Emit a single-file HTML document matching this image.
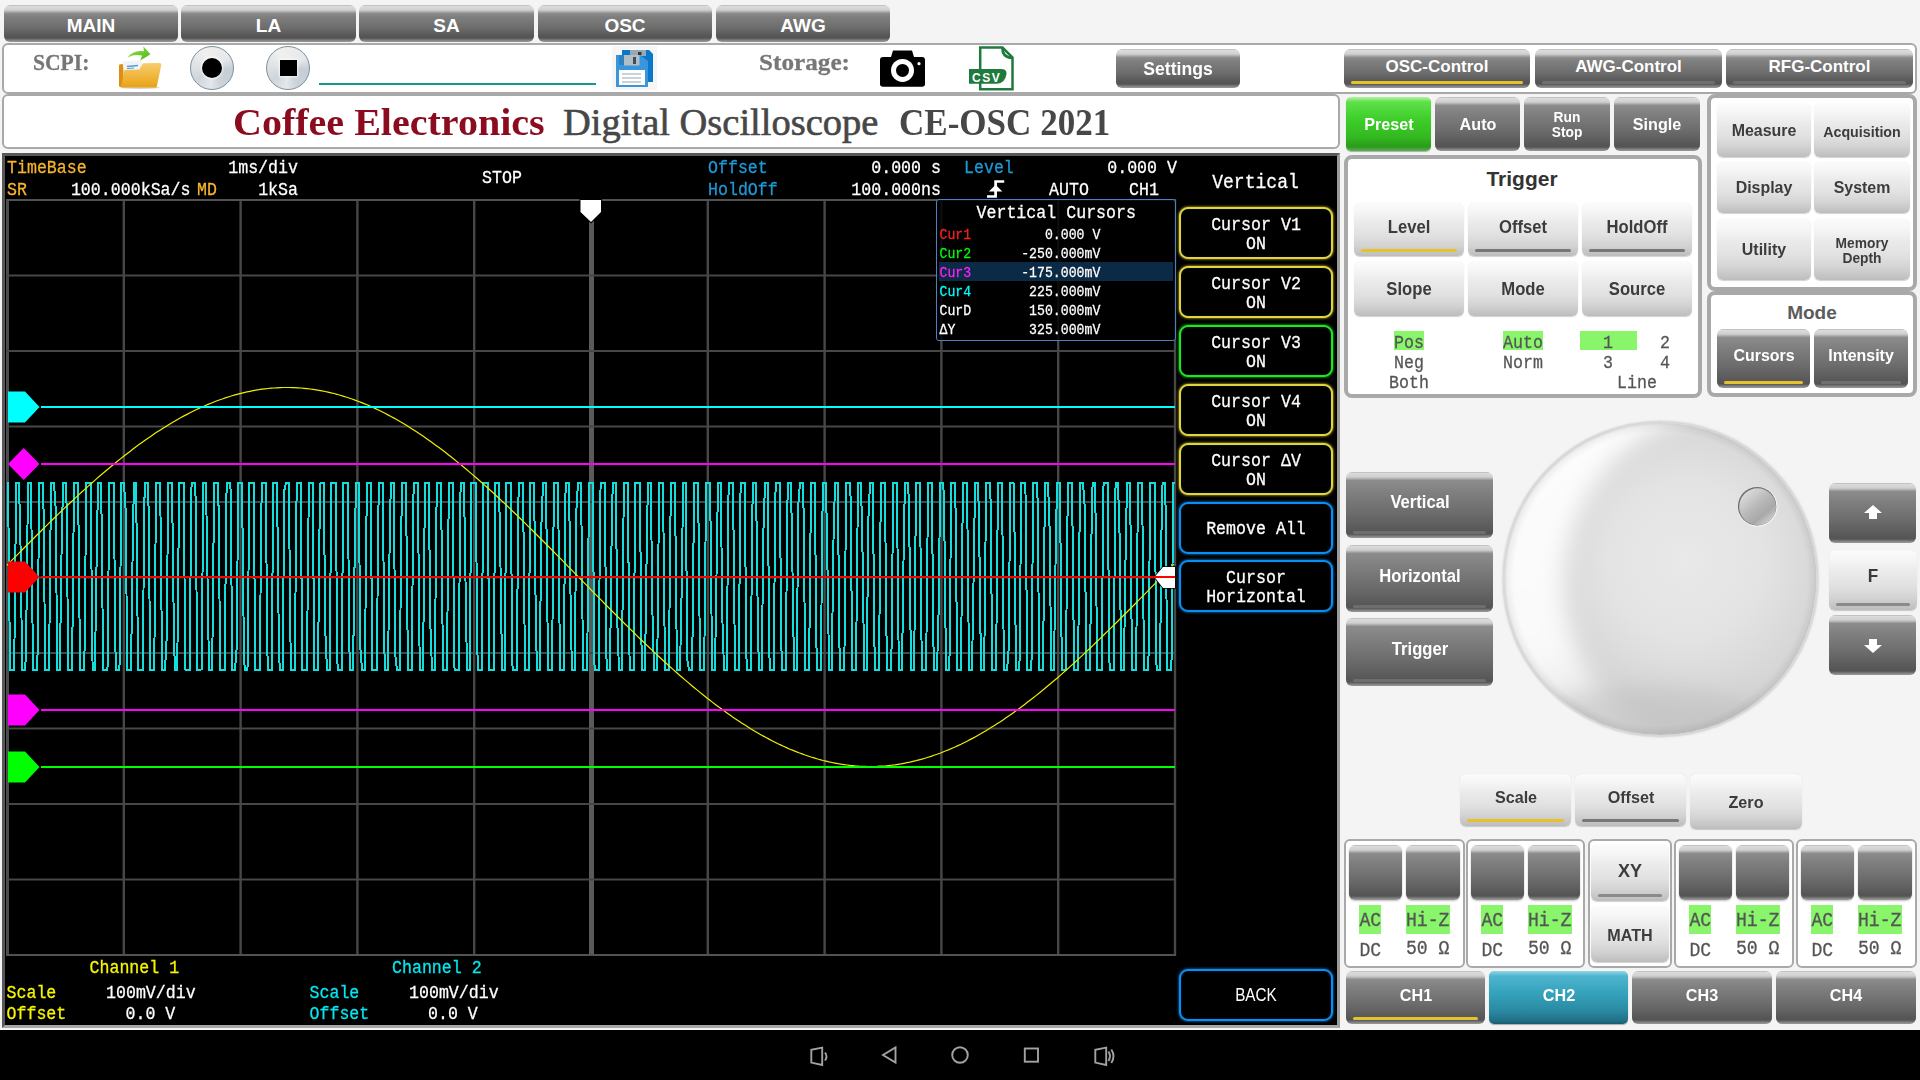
<!DOCTYPE html><html><head><meta charset="utf-8"><style>
html,body{margin:0;padding:0;width:1920px;height:1080px;overflow:hidden;background:#f4f4f4;position:relative}
.t{position:absolute;white-space:pre}
div{position:absolute}
</style></head><body>
<div style="position:absolute;left:4px;top:5px;width:174px;height:37px;box-sizing:border-box;background:linear-gradient(#a8a8a8 0px,#dcdcdc 1px,#d0d0d0 5px,#8c8c8c 8.5px,#808080 30%,#6c6c6c 62%,#565656 calc(100% - 6px),#545454 calc(100% - 4px),#858585 calc(100% - 1.5px),#9a9a9a 100%);border-radius:6px;"></div>
<div class="t" style="left:-409.0px;width:1000px;text-align:center;top:16.45px;font:bold 19px/19px 'Liberation Sans', sans-serif;color:#fff;">MAIN</div>
<div style="position:absolute;left:181px;top:5px;width:175px;height:37px;box-sizing:border-box;background:linear-gradient(#a8a8a8 0px,#dcdcdc 1px,#d0d0d0 5px,#8c8c8c 8.5px,#808080 30%,#6c6c6c 62%,#565656 calc(100% - 6px),#545454 calc(100% - 4px),#858585 calc(100% - 1.5px),#9a9a9a 100%);border-radius:6px;"></div>
<div class="t" style="left:-231.5px;width:1000px;text-align:center;top:16.45px;font:bold 19px/19px 'Liberation Sans', sans-serif;color:#fff;">LA</div>
<div style="position:absolute;left:359px;top:5px;width:175px;height:37px;box-sizing:border-box;background:linear-gradient(#a8a8a8 0px,#dcdcdc 1px,#d0d0d0 5px,#8c8c8c 8.5px,#808080 30%,#6c6c6c 62%,#565656 calc(100% - 6px),#545454 calc(100% - 4px),#858585 calc(100% - 1.5px),#9a9a9a 100%);border-radius:6px;"></div>
<div class="t" style="left:-53.5px;width:1000px;text-align:center;top:16.45px;font:bold 19px/19px 'Liberation Sans', sans-serif;color:#fff;">SA</div>
<div style="position:absolute;left:538px;top:5px;width:174px;height:37px;box-sizing:border-box;background:linear-gradient(#a8a8a8 0px,#dcdcdc 1px,#d0d0d0 5px,#8c8c8c 8.5px,#808080 30%,#6c6c6c 62%,#565656 calc(100% - 6px),#545454 calc(100% - 4px),#858585 calc(100% - 1.5px),#9a9a9a 100%);border-radius:6px;"></div>
<div class="t" style="left:125.0px;width:1000px;text-align:center;top:16.45px;font:bold 19px/19px 'Liberation Sans', sans-serif;color:#fff;">OSC</div>
<div style="position:absolute;left:716px;top:5px;width:174px;height:37px;box-sizing:border-box;background:linear-gradient(#a8a8a8 0px,#dcdcdc 1px,#d0d0d0 5px,#8c8c8c 8.5px,#808080 30%,#6c6c6c 62%,#565656 calc(100% - 6px),#545454 calc(100% - 4px),#858585 calc(100% - 1.5px),#9a9a9a 100%);border-radius:6px;"></div>
<div class="t" style="left:303.0px;width:1000px;text-align:center;top:16.45px;font:bold 19px/19px 'Liberation Sans', sans-serif;color:#fff;">AWG</div>
<div style="position:absolute;left:2px;top:43px;width:1915px;height:51px;box-sizing:border-box;background:#fff;border:2px solid #a9a9a9;border-radius:6px;"></div>
<div class="t" style="left:33px;top:50.40px;font:bold 24px/24px 'Liberation Serif', serif;color:#777;transform:scale(0.9,1.0);transform-origin:0 20.1px;-webkit-text-stroke:0.3px #777;">SCPI:</div>
<div class="t" style="left:759px;top:50.40px;font:bold 24px/24px 'Liberation Serif', serif;color:#777;transform:scale(1.05,1.0);transform-origin:0 20.1px;-webkit-text-stroke:0.3px #777;">Storage:</div>
<svg style="position:absolute;left:114px;top:44px" width="52" height="48" viewBox="114 44 52 48">
<defs><linearGradient id="fg" x1="0" y1="0" x2="0" y2="1"><stop offset="0" stop-color="#f7cd6e"/><stop offset="1" stop-color="#e9a313"/></linearGradient>
<linearGradient id="ag" x1="0" y1="0" x2="1" y2="1"><stop offset="0" stop-color="#9be04a"/><stop offset="1" stop-color="#4cb81a"/></linearGradient></defs>
<ellipse cx="140" cy="87.6" rx="20" ry="1.3" fill="#000" opacity=".18"/>
<path d="M119 65.5 Q119 64.3 120.5 64.2 L123.5 64 L123.5 87 L120.5 87 Q119 87 119 85.5 Z" fill="#de8e12"/>
<path d="M122.5 61.5 L141 60 L144 70 L124 72 Z" fill="#f1f4f7"/>
<path d="M127 66.5 L138 65.5" stroke="#5b9ad8" stroke-width="1.6"/>
<path d="M127 68.6 L134 68" stroke="#5b9ad8" stroke-width="1"/>
<path d="M121 86.8 L124.5 70 L139.5 69.5 L143 63.2 L159.5 63 Q161.8 63.2 161.2 65.2 L156.8 86.8 Q156.4 87.5 155 87.5 L122.5 87.5 Q120.8 87.5 121 86.8 Z" fill="url(#fg)"/>
<path d="M127.8 57.5 Q133 49.5 144 51.2 L143.3 46.2 L150.5 54.2 L140.3 60.5 L142 55.6 Q134 54 127.8 57.5 Z" fill="url(#ag)"/>
</svg>
<div style="position:absolute;left:190.2px;top:45.8px;width:44.0px;height:44.0px;box-sizing:border-box;border-radius:50%;border:1px solid #7a909e;background:conic-gradient(from 0deg,#eeeeec 0deg,#e6e8ea 60deg,#c6cdd4 95deg,#cbd2d8 150deg,#e4e8ec 185deg,#cfd5da 230deg,#dfe3e6 280deg,#f0f0ee 330deg,#eeeeec 360deg);"></div>
<div style="position:absolute;left:266.4px;top:46px;width:44.0px;height:44px;box-sizing:border-box;border-radius:50%;border:1px solid #7a909e;background:conic-gradient(from 0deg,#eeeeec 0deg,#e6e8ea 60deg,#c6cdd4 95deg,#cbd2d8 150deg,#e4e8ec 185deg,#cfd5da 230deg,#dfe3e6 280deg,#f0f0ee 330deg,#eeeeec 360deg);"></div>
<div style="position:absolute;left:202.4px;top:58.099999999999994px;width:20.0px;height:20.0px;box-sizing:border-box;border-radius:50%;background:#000;box-shadow:0 0 2px 1px rgba(255,255,255,.8);"></div>
<div style="position:absolute;left:280.4px;top:59.7px;width:17.0px;height:16.599999999999994px;box-sizing:border-box;background:#000;box-shadow:0 0 2px 1px rgba(255,255,255,.8);"></div>
<div style="position:absolute;left:319px;top:83px;width:277px;height:2px;box-sizing:border-box;background:#129a8e;"></div>
<svg style="position:absolute;left:612px;top:46px" width="46" height="44" viewBox="612 46 46 44">
<rect x="612" y="46" width="45" height="44" fill="#f6f6f6"/>
<path d="M622 50 L649 50 L653 54 L653 82 L622 82 Z" fill="#0a78c8"/>
<rect x="630" y="50" width="16" height="6" fill="#98a8b2"/>
<rect x="638" y="52" width="3.5" height="3" fill="#2a3a44"/>
<path d="M616 55 L640 55 L648 61 L648 87 L616 87 Z" fill="#3a96dc"/>
<rect x="619" y="55" width="5" height="10" fill="#2f82c0"/>
<rect x="624" y="55" width="15.5" height="10.5" fill="#b1bec6"/>
<rect x="633" y="57" width="3" height="7" fill="#3c4e58"/>
<rect x="619" y="70" width="26" height="15" fill="#fff"/>
<rect x="622" y="73" width="19" height="2" fill="#cbd3da"/>
<rect x="622" y="77" width="19" height="2" fill="#cbd3da"/>
<rect x="622" y="81" width="19" height="2" fill="#cbd3da"/>
</svg>
<svg style="position:absolute;left:878px;top:48px" width="50" height="42" viewBox="878 48 50 42">
<path d="M893 50.5 L912 50.5 L914 57 L922 57 Q925 57 925 60 L925 84 Q925 86.7 922 86.7 L883 86.7 Q880 86.7 880 84 L880 60 Q880 57 883 57 L891 57 Z" fill="#000"/>
<circle cx="902.5" cy="70.4" r="11.5" fill="#fff"/>
<circle cx="902.5" cy="70.4" r="6.5" fill="#000"/>
<circle cx="919" cy="63.7" r="1.6" fill="#fff"/>
</svg>
<svg style="position:absolute;left:966px;top:44px" width="52" height="50" viewBox="966 44 52 50">
<path d="M980.2 47.5 L1002.5 47.5 L1012.5 57.5 L1012.5 89.2 L980.2 89.2 Z" fill="#fff" stroke="#1f7a3d" stroke-width="2.5"/>
<path d="M1002.5 48 Q1002 57 1012 58" fill="none" stroke="#1f7a3d" stroke-width="2.5"/>
<path d="M969 69 L1001 69 Q1007 69 1006.5 74 Q1005 83.5 997 83.7 L969 83.7 Z" fill="#1f7a3d"/>
<text x="972" y="81.5" font-family="Liberation Sans" font-weight="bold" font-size="12" fill="#fff" letter-spacing="1.5">CSV</text>
</svg>
<div style="position:absolute;left:1116px;top:49px;width:124px;height:39px;box-sizing:border-box;background:linear-gradient(#a8a8a8 0px,#dcdcdc 1px,#d0d0d0 5px,#8c8c8c 8.5px,#808080 30%,#6c6c6c 62%,#565656 calc(100% - 6px),#545454 calc(100% - 4px),#858585 calc(100% - 1.5px),#9a9a9a 100%);border-radius:6px;"></div>
<div class="t" style="left:678.0px;width:1000px;text-align:center;top:60.20px;font:bold 18.5px/18.5px 'Liberation Sans', sans-serif;color:#fff;transform:scale(0.95,1.0);transform-origin:50% 15.66395px;">Settings</div>
<div style="position:absolute;left:1344px;top:49px;width:186px;height:39px;box-sizing:border-box;background:linear-gradient(#a8a8a8 0px,#dcdcdc 1px,#d0d0d0 5px,#8c8c8c 8.5px,#808080 30%,#6c6c6c 62%,#565656 calc(100% - 6px),#545454 calc(100% - 4px),#858585 calc(100% - 1.5px),#9a9a9a 100%);border-radius:6px;"></div>
<div class="t" style="left:937.0px;width:1000px;text-align:center;top:57.95px;font:bold 17px/17px 'Liberation Sans', sans-serif;color:#fff;">OSC-Control</div>
<div style="position:absolute;left:1351px;top:80.5px;width:172px;height:3.5px;box-sizing:border-box;background:#e6c12e;border-radius:1.5px;"></div>
<div style="position:absolute;left:1535px;top:49px;width:187px;height:39px;box-sizing:border-box;background:linear-gradient(#a8a8a8 0px,#dcdcdc 1px,#d0d0d0 5px,#8c8c8c 8.5px,#808080 30%,#6c6c6c 62%,#565656 calc(100% - 6px),#545454 calc(100% - 4px),#858585 calc(100% - 1.5px),#9a9a9a 100%);border-radius:6px;"></div>
<div class="t" style="left:1128.5px;width:1000px;text-align:center;top:57.95px;font:bold 17px/17px 'Liberation Sans', sans-serif;color:#fff;">AWG-Control</div>
<div style="position:absolute;left:1542px;top:80.5px;width:173px;height:3.5px;box-sizing:border-box;background:#6e6e6e;border-radius:1.5px;"></div>
<div style="position:absolute;left:1726px;top:49px;width:187px;height:39px;box-sizing:border-box;background:linear-gradient(#a8a8a8 0px,#dcdcdc 1px,#d0d0d0 5px,#8c8c8c 8.5px,#808080 30%,#6c6c6c 62%,#565656 calc(100% - 6px),#545454 calc(100% - 4px),#858585 calc(100% - 1.5px),#9a9a9a 100%);border-radius:6px;"></div>
<div class="t" style="left:1319.5px;width:1000px;text-align:center;top:57.95px;font:bold 17px/17px 'Liberation Sans', sans-serif;color:#fff;">RFG-Control</div>
<div style="position:absolute;left:1733px;top:80.5px;width:173px;height:3.5px;box-sizing:border-box;background:#6e6e6e;border-radius:1.5px;"></div>
<div style="position:absolute;left:2px;top:94px;width:1338px;height:55px;box-sizing:border-box;background:#fff;border:2px solid #a9a9a9;border-radius:6px;"></div>
<div class="t" style="left:233px;top:102.76px;font:bold 38.5px/38.5px 'Liberation Serif', serif;color:#8b0b1f;transform:scale(1.04,1.0);transform-origin:0 32.24375px;">Coffee Electronics</div>
<div class="t" style="left:563px;top:102.76px;font:normal 38.5px/38.5px 'Liberation Serif', serif;color:#474747;-webkit-text-stroke:0.6px #474747;">Digital Oscilloscope</div>
<div class="t" style="left:899px;top:102.76px;font:bold 38.5px/38.5px 'Liberation Serif', serif;color:#474747;transform:scale(0.91,1.0);transform-origin:0 32.24375px;">CE-OSC 2021</div>
<div style="position:absolute;left:2px;top:153px;width:1338px;height:875px;box-sizing:border-box;background:#000;border-top:3px solid #585858;border-left:3px solid #585858;border-right:3px solid #9a9a9a;border-bottom:3px solid #a8a8a8;"></div>
<svg style="position:absolute;left:0;top:0" width="1920" height="1080" viewBox="0 0 1920 1080">
<rect x="6" y="199.0" width="3" height="757.0" fill="#4c4c4c"/>
<rect x="122.6" y="199.0" width="2.4" height="757.0" fill="#474747"/>
<rect x="239.4" y="199.0" width="2.4" height="757.0" fill="#474747"/>
<rect x="356.2" y="199.0" width="2.4" height="757.0" fill="#474747"/>
<rect x="473.0" y="199.0" width="2.4" height="757.0" fill="#474747"/>
<rect x="589" y="200.0" width="5" height="755.0" fill="#5a5a5a"/>
<rect x="706.6" y="199.0" width="2.4" height="757.0" fill="#474747"/>
<rect x="823.4" y="199.0" width="2.4" height="757.0" fill="#474747"/>
<rect x="940.2" y="199.0" width="2.4" height="757.0" fill="#474747"/>
<rect x="1057.0" y="199.0" width="2.4" height="757.0" fill="#474747"/>
<rect x="1173.8" y="199.0" width="2.4" height="757.0" fill="#474747"/>
<rect x="6.0" y="199.0" width="1170.0" height="2" fill="#525252"/>
<rect x="6.0" y="274.5" width="1170.0" height="2" fill="#474747"/>
<rect x="6.0" y="350.0" width="1170.0" height="2" fill="#474747"/>
<rect x="6.0" y="425.5" width="1170.0" height="2" fill="#474747"/>
<rect x="6.0" y="501.0" width="1170.0" height="2" fill="#474747"/>
<rect x="6.0" y="576.5" width="1170.0" height="2" fill="#474747"/>
<rect x="6.0" y="652.0" width="1170.0" height="2" fill="#474747"/>
<rect x="6.0" y="727.5" width="1170.0" height="2" fill="#474747"/>
<rect x="6.0" y="803.0" width="1170.0" height="2" fill="#474747"/>
<rect x="6.0" y="878.5" width="1170.0" height="2" fill="#474747"/>
<rect x="6.0" y="954.0" width="1170.0" height="2" fill="#525252"/>
<polyline points="7.0,483.0 8.0,483.0 9.0,569.8 10.0,670.0 11.0,670.0 12.0,670.0 14.0,670.0 15.0,609.5 16.0,483.0 17.0,483.0 18.0,483.0 19.0,483.0 21.0,565.2 22.0,670.0 23.0,670.0 24.0,670.0 25.0,670.0 26.0,654.2 28.0,483.0 29.0,483.0 30.0,483.0 31.0,483.0 32.0,573.6 33.0,670.0 35.0,670.0 36.0,670.0 37.0,670.0 38.0,641.0 39.0,483.0 40.0,483.0 42.0,483.0 43.0,483.0 44.0,533.3 45.0,670.0 46.0,670.0 47.0,670.0 49.0,670.0 50.0,580.4 51.0,483.0 52.0,483.0 53.0,483.0 54.0,483.0 56.0,512.9 57.0,670.0 58.0,670.0 59.0,670.0 60.0,670.0 61.0,579.5 63.0,483.0 64.0,483.0 65.0,483.0 66.0,483.0 67.0,520.7 68.0,670.0 70.0,670.0 71.0,670.0 72.0,670.0 73.0,585.6 74.0,483.0 75.0,483.0 77.0,483.0 78.0,483.0 79.0,563.7 80.0,670.0 81.0,670.0 82.0,670.0 84.0,670.0 85.0,633.9 86.0,483.0 87.0,483.0 88.0,483.0 89.0,483.0 91.0,483.0 92.0,652.5 93.0,670.0 94.0,670.0 95.0,670.0 96.0,596.4 98.0,483.0 99.0,483.0 100.0,483.0 101.0,483.0 102.0,542.6 103.0,670.0 105.0,670.0 106.0,670.0 107.0,670.0 108.0,664.2 109.0,483.0 110.0,483.0 112.0,483.0 113.0,483.0 114.0,483.0 115.0,632.9 116.0,670.0 117.0,670.0 119.0,670.0 120.0,659.5 121.0,483.0 122.0,483.0 123.0,483.0 124.0,483.0 126.0,516.2 127.0,670.0 128.0,670.0 129.0,670.0 130.0,670.0 131.0,670.0 133.0,526.6 134.0,483.0 135.0,483.0 136.0,483.0 137.0,560.1 138.0,670.0 140.0,670.0 141.0,670.0 142.0,670.0 143.0,670.0 144.0,513.1 145.0,483.0 147.0,483.0 148.0,483.0 149.0,526.4 150.0,670.0 151.0,670.0 153.0,670.0 154.0,670.0 155.0,608.5 156.0,483.0 157.0,483.0 158.0,483.0 160.0,483.0 161.0,547.1 162.0,670.0 163.0,670.0 164.0,670.0 165.0,670.0 167.0,631.8 168.0,483.0 169.0,483.0 170.0,483.0 171.0,483.0 172.0,483.0 174.0,640.8 175.0,670.0 176.0,670.0 177.0,670.0 178.0,617.0 179.0,483.0 181.0,483.0 182.0,483.0 183.0,483.0 184.0,483.0 185.0,669.6 186.0,670.0 188.0,670.0 189.0,670.0 190.0,670.0 191.0,491.8 192.0,483.0 193.0,483.0 195.0,483.0 196.0,508.1 197.0,670.0 198.0,670.0 199.0,670.0 200.0,670.0 202.0,668.8 203.0,483.0 204.0,483.0 205.0,483.0 206.0,483.0 207.0,546.8 209.0,670.0 210.0,670.0 211.0,670.0 212.0,670.0 213.0,606.7 214.0,483.0 216.0,483.0 217.0,483.0 218.0,483.0 219.0,526.2 220.0,670.0 221.0,670.0 223.0,670.0 224.0,670.0 225.0,670.0 226.0,502.9 227.0,483.0 228.0,483.0 230.0,483.0 231.0,495.3 232.0,670.0 233.0,670.0 234.0,670.0 235.0,670.0 237.0,643.8 238.0,483.0 239.0,483.0 240.0,483.0 241.0,483.0 242.0,483.0 244.0,659.7 245.0,670.0 246.0,670.0 247.0,670.0 248.0,663.9 249.0,483.0 251.0,483.0 252.0,483.0 253.0,483.0 254.0,483.0 255.0,670.0 256.0,670.0 258.0,670.0 259.0,670.0 260.0,670.0 261.0,523.4 262.0,483.0 263.0,483.0 265.0,483.0 266.0,483.0 267.0,641.1 268.0,670.0 269.0,670.0 270.0,670.0 272.0,670.0 273.0,483.0 274.0,483.0 275.0,483.0 276.0,483.0 277.0,483.0 279.0,655.6 280.0,670.0 281.0,670.0 282.0,670.0 283.0,670.0 284.0,491.9 286.0,483.0 287.0,483.0 288.0,483.0 289.0,483.0 290.0,614.3 291.0,670.0 293.0,670.0 294.0,670.0 295.0,670.0 296.0,520.5 297.0,483.0 299.0,483.0 300.0,483.0 301.0,483.0 302.0,670.0 303.0,670.0 304.0,670.0 306.0,670.0 307.0,670.0 308.0,555.2 309.0,483.0 310.0,483.0 311.0,483.0 313.0,483.0 314.0,670.0 315.0,670.0 316.0,670.0 317.0,670.0 318.0,670.0 320.0,483.5 321.0,483.0 322.0,483.0 323.0,483.0 324.0,483.0 325.0,624.2 327.0,670.0 328.0,670.0 329.0,670.0 330.0,670.0 331.0,483.0 332.0,483.0 334.0,483.0 335.0,483.0 336.0,483.0 337.0,657.4 338.0,670.0 339.0,670.0 341.0,670.0 342.0,670.0 343.0,483.0 344.0,483.0 345.0,483.0 346.0,483.0 348.0,483.0 349.0,632.1 350.0,670.0 351.0,670.0 352.0,670.0 353.0,670.0 355.0,534.5 356.0,483.0 357.0,483.0 358.0,483.0 359.0,483.0 360.0,642.7 362.0,670.0 363.0,670.0 364.0,670.0 365.0,670.0 366.0,550.9 367.0,483.0 369.0,483.0 370.0,483.0 371.0,483.0 372.0,670.0 373.0,670.0 374.0,670.0 376.0,670.0 377.0,670.0 378.0,529.1 379.0,483.0 380.0,483.0 381.0,483.0 383.0,483.0 384.0,636.1 385.0,670.0 386.0,670.0 387.0,670.0 388.0,670.0 390.0,515.9 391.0,483.0 392.0,483.0 393.0,483.0 394.0,483.0 395.0,652.4 397.0,670.0 398.0,670.0 399.0,670.0 400.0,670.0 401.0,551.8 402.0,483.0 404.0,483.0 405.0,483.0 406.0,483.0 407.0,586.5 408.0,670.0 409.0,670.0 411.0,670.0 412.0,670.0 413.0,505.8 414.0,483.0 415.0,483.0 416.0,483.0 418.0,483.0 419.0,621.4 420.0,670.0 421.0,670.0 422.0,670.0 423.0,670.0 425.0,483.0 426.0,483.0 427.0,483.0 428.0,483.0 429.0,483.0 430.0,614.6 432.0,670.0 433.0,670.0 434.0,670.0 435.0,670.0 436.0,532.2 437.0,483.0 439.0,483.0 440.0,483.0 441.0,483.0 442.0,574.6 443.0,670.0 445.0,670.0 446.0,670.0 447.0,670.0 448.0,556.9 449.0,483.0 450.0,483.0 452.0,483.0 453.0,483.0 454.0,665.5 455.0,670.0 456.0,670.0 457.0,670.0 459.0,670.0 460.0,501.7 461.0,483.0 462.0,483.0 463.0,483.0 464.0,483.0 466.0,613.3 467.0,670.0 468.0,670.0 469.0,670.0 470.0,670.0 471.0,483.0 473.0,483.0 474.0,483.0 475.0,483.0 476.0,483.0 477.0,638.5 478.0,670.0 480.0,670.0 481.0,670.0 482.0,670.0 483.0,483.0 484.0,483.0 485.0,483.0 487.0,483.0 488.0,483.0 489.0,670.0 490.0,670.0 491.0,670.0 492.0,670.0 494.0,670.0 495.0,483.0 496.0,483.0 497.0,483.0 498.0,483.0 499.0,483.0 501.0,594.7 502.0,670.0 503.0,670.0 504.0,670.0 505.0,670.0 506.0,483.0 508.0,483.0 509.0,483.0 510.0,483.0 511.0,483.0 512.0,661.0 513.0,670.0 515.0,670.0 516.0,670.0 517.0,670.0 518.0,511.7 519.0,483.0 520.0,483.0 522.0,483.0 523.0,483.0 524.0,577.4 525.0,670.0 526.0,670.0 527.0,670.0 529.0,670.0 530.0,483.0 531.0,483.0 532.0,483.0 533.0,483.0 534.0,483.0 536.0,630.8 537.0,670.0 538.0,670.0 539.0,670.0 540.0,670.0 541.0,536.2 543.0,483.0 544.0,483.0 545.0,483.0 546.0,483.0 547.0,572.1 548.0,670.0 550.0,670.0 551.0,670.0 552.0,670.0 553.0,573.4 554.0,483.0 555.0,483.0 557.0,483.0 558.0,483.0 559.0,572.8 560.0,670.0 561.0,670.0 562.0,670.0 564.0,670.0 565.0,504.5 566.0,483.0 567.0,483.0 568.0,483.0 569.0,483.0 571.0,629.7 572.0,670.0 573.0,670.0 574.0,670.0 575.0,670.0 576.0,516.9 578.0,483.0 579.0,483.0 580.0,483.0 581.0,483.0 582.0,566.4 583.0,670.0 585.0,670.0 586.0,670.0 587.0,670.0 588.0,597.1 589.0,483.0 591.0,483.0 592.0,483.0 593.0,483.0 594.0,660.5 595.0,670.0 596.0,670.0 598.0,670.0 599.0,670.0 600.0,496.7 601.0,483.0 602.0,483.0 603.0,483.0 605.0,483.0 606.0,648.1 607.0,670.0 608.0,670.0 609.0,670.0 610.0,670.0 612.0,506.1 613.0,483.0 614.0,483.0 615.0,483.0 616.0,483.0 617.0,613.1 619.0,670.0 620.0,670.0 621.0,670.0 622.0,670.0 623.0,554.5 624.0,483.0 626.0,483.0 627.0,483.0 628.0,483.0 629.0,640.3 630.0,670.0 631.0,670.0 633.0,670.0 634.0,670.0 635.0,483.0 636.0,483.0 637.0,483.0 638.0,483.0 640.0,483.0 641.0,618.0 642.0,670.0 643.0,670.0 644.0,670.0 645.0,670.0 647.0,529.5 648.0,483.0 649.0,483.0 650.0,483.0 651.0,483.0 652.0,596.8 654.0,670.0 655.0,670.0 656.0,670.0 657.0,670.0 658.0,607.8 659.0,483.0 661.0,483.0 662.0,483.0 663.0,483.0 664.0,578.7 665.0,670.0 666.0,670.0 668.0,670.0 669.0,670.0 670.0,552.3 671.0,483.0 672.0,483.0 673.0,483.0 675.0,483.0 676.0,586.4 677.0,670.0 678.0,670.0 679.0,670.0 680.0,670.0 682.0,575.3 683.0,483.0 684.0,483.0 685.0,483.0 686.0,483.0 687.0,658.3 689.0,670.0 690.0,670.0 691.0,670.0 692.0,670.0 693.0,606.4 694.0,483.0 696.0,483.0 697.0,483.0 698.0,483.0 699.0,561.4 700.0,670.0 701.0,670.0 703.0,670.0 704.0,670.0 705.0,605.0 706.0,483.0 707.0,483.0 708.0,483.0 710.0,483.0 711.0,557.1 712.0,670.0 713.0,670.0 714.0,670.0 715.0,670.0 717.0,543.7 718.0,483.0 719.0,483.0 720.0,483.0 721.0,483.0 722.0,607.5 724.0,670.0 725.0,670.0 726.0,670.0 727.0,670.0 728.0,507.8 729.0,483.0 731.0,483.0 732.0,483.0 733.0,483.0 734.0,574.8 735.0,670.0 737.0,670.0 738.0,670.0 739.0,670.0 740.0,504.2 741.0,483.0 742.0,483.0 744.0,483.0 745.0,483.0 746.0,647.2 747.0,670.0 748.0,670.0 749.0,670.0 751.0,670.0 752.0,525.3 753.0,483.0 754.0,483.0 755.0,483.0 756.0,483.0 758.0,632.9 759.0,670.0 760.0,670.0 761.0,670.0 762.0,670.0 763.0,544.3 765.0,483.0 766.0,483.0 767.0,483.0 768.0,483.0 769.0,645.4 770.0,670.0 772.0,670.0 773.0,670.0 774.0,670.0 775.0,501.7 776.0,483.0 777.0,483.0 779.0,483.0 780.0,483.0 781.0,630.6 782.0,670.0 783.0,670.0 784.0,670.0 786.0,670.0 787.0,516.9 788.0,483.0 789.0,483.0 790.0,483.0 791.0,483.0 793.0,600.9 794.0,670.0 795.0,670.0 796.0,670.0 797.0,670.0 798.0,508.8 800.0,483.0 801.0,483.0 802.0,483.0 803.0,483.0 804.0,532.2 805.0,670.0 807.0,670.0 808.0,670.0 809.0,670.0 810.0,587.7 811.0,483.0 812.0,483.0 814.0,483.0 815.0,483.0 816.0,625.3 817.0,670.0 818.0,670.0 819.0,670.0 821.0,670.0 822.0,542.2 823.0,483.0 824.0,483.0 825.0,483.0 826.0,483.0 828.0,597.4 829.0,670.0 830.0,670.0 831.0,670.0 832.0,670.0 833.0,558.7 835.0,483.0 836.0,483.0 837.0,483.0 838.0,483.0 839.0,624.9 840.0,670.0 842.0,670.0 843.0,670.0 844.0,670.0 845.0,624.0 846.0,483.0 847.0,483.0 849.0,483.0 850.0,483.0 851.0,509.1 852.0,670.0 853.0,670.0 854.0,670.0 856.0,670.0 857.0,575.8 858.0,483.0 859.0,483.0 860.0,483.0 861.0,483.0 863.0,573.9 864.0,670.0 865.0,670.0 866.0,670.0 867.0,670.0 868.0,527.9 870.0,483.0 871.0,483.0 872.0,483.0 873.0,483.0 874.0,622.0 875.0,670.0 877.0,670.0 878.0,670.0 879.0,670.0 880.0,563.4 881.0,483.0 883.0,483.0 884.0,483.0 885.0,483.0 886.0,598.9 887.0,670.0 888.0,670.0 890.0,670.0 891.0,670.0 892.0,628.9 893.0,483.0 894.0,483.0 895.0,483.0 897.0,483.0 898.0,610.5 899.0,670.0 900.0,670.0 901.0,670.0 902.0,670.0 904.0,525.3 905.0,483.0 906.0,483.0 907.0,483.0 908.0,483.0 909.0,505.3 911.0,670.0 912.0,670.0 913.0,670.0 914.0,670.0 915.0,593.3 916.0,483.0 918.0,483.0 919.0,483.0 920.0,483.0 921.0,608.7 922.0,670.0 923.0,670.0 925.0,670.0 926.0,670.0 927.0,597.1 928.0,483.0 929.0,483.0 930.0,483.0 932.0,483.0 933.0,622.5 934.0,670.0 935.0,670.0 936.0,670.0 937.0,670.0 939.0,597.0 940.0,483.0 941.0,483.0 942.0,483.0 943.0,483.0 944.0,496.1 946.0,670.0 947.0,670.0 948.0,670.0 949.0,670.0 950.0,642.8 951.0,483.0 953.0,483.0 954.0,483.0 955.0,483.0 956.0,531.2 957.0,670.0 958.0,670.0 960.0,670.0 961.0,670.0 962.0,565.8 963.0,483.0 964.0,483.0 965.0,483.0 967.0,483.0 968.0,572.4 969.0,670.0 970.0,670.0 971.0,670.0 972.0,670.0 974.0,555.4 975.0,483.0 976.0,483.0 977.0,483.0 978.0,483.0 979.0,517.5 981.0,670.0 982.0,670.0 983.0,670.0 984.0,670.0 985.0,605.1 986.0,483.0 988.0,483.0 989.0,483.0 990.0,483.0 991.0,514.7 992.0,670.0 993.0,670.0 995.0,670.0 996.0,670.0 997.0,580.4 998.0,483.0 999.0,483.0 1000.0,483.0 1002.0,483.0 1003.0,585.6 1004.0,670.0 1005.0,670.0 1006.0,670.0 1007.0,670.0 1009.0,645.3 1010.0,483.0 1011.0,483.0 1012.0,483.0 1013.0,483.0 1014.0,484.0 1016.0,670.0 1017.0,670.0 1018.0,670.0 1019.0,670.0 1020.0,652.6 1021.0,483.0 1023.0,483.0 1024.0,483.0 1025.0,483.0 1026.0,505.6 1027.0,670.0 1029.0,670.0 1030.0,670.0 1031.0,670.0 1032.0,650.0 1033.0,483.0 1034.0,483.0 1036.0,483.0 1037.0,483.0 1038.0,512.4 1039.0,670.0 1040.0,670.0 1041.0,670.0 1043.0,670.0 1044.0,574.4 1045.0,483.0 1046.0,483.0 1047.0,483.0 1048.0,483.0 1050.0,539.6 1051.0,670.0 1052.0,670.0 1053.0,670.0 1054.0,670.0 1055.0,593.1 1057.0,483.0 1058.0,483.0 1059.0,483.0 1060.0,483.0 1061.0,601.7 1062.0,670.0 1064.0,670.0 1065.0,670.0 1066.0,670.0 1067.0,552.1 1068.0,483.0 1069.0,483.0 1071.0,483.0 1072.0,483.0 1073.0,567.0 1074.0,670.0 1075.0,670.0 1076.0,670.0 1078.0,670.0 1079.0,584.2 1080.0,483.0 1081.0,483.0 1082.0,483.0 1083.0,483.0 1085.0,511.1 1086.0,670.0 1087.0,670.0 1088.0,670.0 1089.0,670.0 1090.0,670.0 1092.0,490.4 1093.0,483.0 1094.0,483.0 1095.0,483.0 1096.0,541.3 1097.0,670.0 1099.0,670.0 1100.0,670.0 1101.0,670.0 1102.0,670.0 1103.0,489.7 1104.0,483.0 1106.0,483.0 1107.0,483.0 1108.0,483.0 1109.0,655.7 1110.0,670.0 1111.0,670.0 1113.0,670.0 1114.0,670.0 1115.0,493.9 1116.0,483.0 1117.0,483.0 1118.0,483.0 1120.0,548.4 1121.0,670.0 1122.0,670.0 1123.0,670.0 1124.0,670.0 1125.0,586.7 1127.0,483.0 1128.0,483.0 1129.0,483.0 1130.0,483.0 1131.0,564.6 1132.0,670.0 1134.0,670.0 1135.0,670.0 1136.0,670.0 1137.0,585.4 1138.0,483.0 1139.0,483.0 1141.0,483.0 1142.0,483.0 1143.0,565.6 1144.0,670.0 1145.0,670.0 1146.0,670.0 1148.0,670.0 1149.0,643.2 1150.0,483.0 1151.0,483.0 1152.0,483.0 1153.0,483.0 1155.0,483.0 1156.0,659.7 1157.0,670.0 1158.0,670.0 1159.0,670.0 1160.0,670.0 1162.0,486.4 1163.0,483.0 1164.0,483.0 1165.0,483.0 1166.0,525.9 1167.0,670.0 1169.0,670.0 1170.0,670.0 1171.0,670.0 1172.0,650.8 1173.0,483.0 1175.0,483.0" fill="none" stroke="#12dede" stroke-width="2" stroke-linejoin="miter" shape-rendering="crispEdges"/>
<polyline points="7.0,565.3 10.0,562.2 13.0,559.2 16.0,556.1 19.0,553.1 22.0,550.0 25.0,547.0 28.0,544.0 31.0,541.0 34.0,538.0 37.0,535.0 40.0,532.0 43.0,529.0 46.0,526.1 49.0,523.1 52.0,520.2 55.0,517.3 58.0,514.4 61.0,511.5 64.0,508.6 67.0,505.8 70.0,503.0 73.0,500.1 76.0,497.4 79.0,494.6 82.0,491.8 85.0,489.1 88.0,486.4 91.0,483.7 94.0,481.1 97.0,478.4 100.0,475.8 103.0,473.3 106.0,470.7 109.0,468.2 112.0,465.7 115.0,463.2 118.0,460.8 121.0,458.4 124.0,456.0 127.0,453.7 130.0,451.4 133.0,449.1 136.0,446.8 139.0,444.6 142.0,442.5 145.0,440.3 148.0,438.2 151.0,436.2 154.0,434.1 157.0,432.1 160.0,430.2 163.0,428.3 166.0,426.4 169.0,424.5 172.0,422.7 175.0,421.0 178.0,419.3 181.0,417.6 184.0,415.9 187.0,414.4 190.0,412.8 193.0,411.3 196.0,409.8 199.0,408.4 202.0,407.0 205.0,405.7 208.0,404.4 211.0,403.2 214.0,402.0 217.0,400.8 220.0,399.7 223.0,398.7 226.0,397.6 229.0,396.7 232.0,395.8 235.0,394.9 238.0,394.1 241.0,393.3 244.0,392.6 247.0,391.9 250.0,391.3 253.0,390.7 256.0,390.1 259.0,389.7 262.0,389.2 265.0,388.8 268.0,388.5 271.0,388.2 274.0,388.0 277.0,387.8 280.0,387.6 283.0,387.5 286.0,387.5 289.0,387.5 292.0,387.6 295.0,387.7 298.0,387.8 301.0,388.0 304.0,388.3 307.0,388.6 310.0,389.0 313.0,389.4 316.0,389.8 319.0,390.3 322.0,390.9 325.0,391.5 328.0,392.1 331.0,392.8 334.0,393.5 337.0,394.3 340.0,395.2 343.0,396.1 346.0,397.0 349.0,398.0 352.0,399.0 355.0,400.1 358.0,401.2 361.0,402.4 364.0,403.6 367.0,404.8 370.0,406.1 373.0,407.5 376.0,408.9 379.0,410.3 382.0,411.8 385.0,413.3 388.0,414.9 391.0,416.5 394.0,418.1 397.0,419.8 400.0,421.6 403.0,423.3 406.0,425.1 409.0,427.0 412.0,428.9 415.0,430.8 418.0,432.8 421.0,434.8 424.0,436.8 427.0,438.9 430.0,441.0 433.0,443.2 436.0,445.4 439.0,447.6 442.0,449.8 445.0,452.1 448.0,454.5 451.0,456.8 454.0,459.2 457.0,461.6 460.0,464.1 463.0,466.5 466.0,469.0 469.0,471.6 472.0,474.1 475.0,476.7 478.0,479.3 481.0,482.0 484.0,484.6 487.0,487.3 490.0,490.0 493.0,492.7 496.0,495.5 499.0,498.3 502.0,501.1 505.0,503.9 508.0,506.7 511.0,509.6 514.0,512.5 517.0,515.3 520.0,518.2 523.0,521.2 526.0,524.1 529.0,527.1 532.0,530.0 535.0,533.0 538.0,536.0 541.0,539.0 544.0,542.0 547.0,545.0 550.0,548.0 553.0,551.0 556.0,554.1 559.0,557.1 562.0,560.2 565.0,563.2 568.0,566.3 571.0,569.3 574.0,572.4 577.0,575.5 580.0,578.5 583.0,581.6 586.0,584.7 589.0,587.7 592.0,590.8 595.0,593.8 598.0,596.9 601.0,599.9 604.0,603.0 607.0,606.0 610.0,609.0 613.0,612.0 616.0,615.0 619.0,618.0 622.0,621.0 625.0,624.0 628.0,626.9 631.0,629.9 634.0,632.8 637.0,635.8 640.0,638.7 643.0,641.5 646.0,644.4 649.0,647.3 652.0,650.1 655.0,652.9 658.0,655.7 661.0,658.5 664.0,661.3 667.0,664.0 670.0,666.7 673.0,669.4 676.0,672.0 679.0,674.7 682.0,677.3 685.0,679.9 688.0,682.4 691.0,685.0 694.0,687.5 697.0,689.9 700.0,692.4 703.0,694.8 706.0,697.2 709.0,699.5 712.0,701.9 715.0,704.2 718.0,706.4 721.0,708.6 724.0,710.8 727.0,713.0 730.0,715.1 733.0,717.2 736.0,719.2 739.0,721.2 742.0,723.2 745.0,725.1 748.0,727.0 751.0,728.9 754.0,730.7 757.0,732.4 760.0,734.2 763.0,735.9 766.0,737.5 769.0,739.1 772.0,740.7 775.0,742.2 778.0,743.7 781.0,745.1 784.0,746.5 787.0,747.9 790.0,749.2 793.0,750.4 796.0,751.6 799.0,752.8 802.0,753.9 805.0,755.0 808.0,756.0 811.0,757.0 814.0,757.9 817.0,758.8 820.0,759.7 823.0,760.5 826.0,761.2 829.0,761.9 832.0,762.5 835.0,763.1 838.0,763.7 841.0,764.2 844.0,764.6 847.0,765.0 850.0,765.4 853.0,765.7 856.0,766.0 859.0,766.2 862.0,766.3 865.0,766.4 868.0,766.5 871.0,766.5 874.0,766.5 877.0,766.4 880.0,766.2 883.0,766.0 886.0,765.8 889.0,765.5 892.0,765.2 895.0,764.8 898.0,764.3 901.0,763.9 904.0,763.3 907.0,762.7 910.0,762.1 913.0,761.4 916.0,760.7 919.0,759.9 922.0,759.1 925.0,758.2 928.0,757.3 931.0,756.4 934.0,755.3 937.0,754.3 940.0,753.2 943.0,752.0 946.0,750.8 949.0,749.6 952.0,748.3 955.0,747.0 958.0,745.6 961.0,744.2 964.0,742.7 967.0,741.2 970.0,739.6 973.0,738.1 976.0,736.4 979.0,734.7 982.0,733.0 985.0,731.3 988.0,729.5 991.0,727.6 994.0,725.7 997.0,723.8 1000.0,721.9 1003.0,719.9 1006.0,717.8 1009.0,715.8 1012.0,713.7 1015.0,711.5 1018.0,709.4 1021.0,707.2 1024.0,704.9 1027.0,702.6 1030.0,700.3 1033.0,698.0 1036.0,695.6 1039.0,693.2 1042.0,690.8 1045.0,688.3 1048.0,685.8 1051.0,683.3 1054.0,680.7 1057.0,678.2 1060.0,675.6 1063.0,672.9 1066.0,670.3 1069.0,667.6 1072.0,664.9 1075.0,662.2 1078.0,659.4 1081.0,656.6 1084.0,653.9 1087.0,651.0 1090.0,648.2 1093.0,645.4 1096.0,642.5 1099.0,639.6 1102.0,636.7 1105.0,633.8 1108.0,630.9 1111.0,627.9 1114.0,625.0 1117.0,622.0 1120.0,619.0 1123.0,616.0 1126.0,613.0 1129.0,610.0 1132.0,607.0 1135.0,604.0 1138.0,600.9 1141.0,597.9 1144.0,594.8 1147.0,591.8 1150.0,588.7 1153.0,585.7 1156.0,582.6 1159.0,579.6 1162.0,576.5 1165.0,573.4 1168.0,570.4 1171.0,567.3 1174.0,564.2" fill="none" stroke="#eeee00" stroke-width="1.2"/>
<rect x="41" y="406" width="1134" height="2" fill="#00ffff"/>
<path d="M8 391.5 L25 391.5 L39.5 407 L25 422.5 L8 422.5 Z" fill="#00ffff"/>
<rect x="41" y="463" width="1134" height="2" fill="#ff00ff"/>
<path d="M8 464 L23.7 448 L39.5 464 L23.7 480 Z" fill="#ff00ff"/>
<rect x="41" y="576" width="1134" height="2" fill="#ff0000"/>
<path d="M8 561.5 L25 561.5 L39.5 577 L25 592.5 L8 592.5 Z" fill="#ff0000"/>
<rect x="41" y="709" width="1134" height="2" fill="#ff00ff"/>
<path d="M8 694.5 L25 694.5 L39.5 710 L25 725.5 L8 725.5 Z" fill="#ff00ff"/>
<rect x="41" y="766" width="1134" height="2" fill="#00ff00"/>
<path d="M8 751.5 L25 751.5 L39.5 767 L25 782.5 L8 782.5 Z" fill="#00ff00"/>
<path d="M1175 567 L1163 567 L1154.5 577 L1163 588 L1175 588 Z" fill="#fff" stroke="#000" stroke-width="1.6" paint-order="stroke"/>
<rect x="1154" y="576" width="21" height="2" fill="#ff0000"/>
<path d="M580.5 200 L601 200 L601 212 L591 222 L580.5 212 Z" fill="#fff" stroke="#000" stroke-width="2" paint-order="stroke"/>
</svg>
<div class="t" style="left:7px;top:160.98px;font:normal 16.61px/16.61px 'Liberation Mono', monospace;color:#f7b52c;transform:scale(1.0,1.12);transform-origin:0 12.72326px;-webkit-text-stroke:0.25px currentColor;">TimeBase</div>
<div class="t" style="right:1622px;top:160.98px;font:normal 16.61px/16.61px 'Liberation Mono', monospace;color:#ffffff;transform:scale(1.0,1.12);transform-origin:100% 12.72326px;-webkit-text-stroke:0.25px currentColor;">1ms/div</div>
<div class="t" style="left:7px;top:182.88px;font:normal 16.61px/16.61px 'Liberation Mono', monospace;color:#f7b52c;transform:scale(1.0,1.12);transform-origin:0 12.72326px;-webkit-text-stroke:0.25px currentColor;">SR</div>
<div class="t" style="right:1729.5px;top:182.88px;font:normal 16.61px/16.61px 'Liberation Mono', monospace;color:#ffffff;transform:scale(1.0,1.12);transform-origin:100% 12.72326px;-webkit-text-stroke:0.25px currentColor;">100.000kSa/s</div>
<div class="t" style="left:197px;top:182.88px;font:normal 16.61px/16.61px 'Liberation Mono', monospace;color:#f7b52c;transform:scale(1.0,1.12);transform-origin:0 12.72326px;-webkit-text-stroke:0.25px currentColor;">MD</div>
<div class="t" style="right:1622px;top:182.88px;font:normal 16.61px/16.61px 'Liberation Mono', monospace;color:#ffffff;transform:scale(1.0,1.12);transform-origin:100% 12.72326px;-webkit-text-stroke:0.25px currentColor;">1kSa</div>
<div class="t" style="left:482px;top:171.28px;font:normal 16.61px/16.61px 'Liberation Mono', monospace;color:#ffffff;transform:scale(1.0,1.12);transform-origin:0 12.72326px;-webkit-text-stroke:0.25px currentColor;">STOP</div>
<div class="t" style="left:708px;top:160.98px;font:normal 16.61px/16.61px 'Liberation Mono', monospace;color:#1c9bd8;transform:scale(1.0,1.12);transform-origin:0 12.72326px;-webkit-text-stroke:0.25px currentColor;">Offset</div>
<div class="t" style="left:708px;top:182.88px;font:normal 16.61px/16.61px 'Liberation Mono', monospace;color:#1c9bd8;transform:scale(1.0,1.12);transform-origin:0 12.72326px;-webkit-text-stroke:0.25px currentColor;">HoldOff</div>
<div class="t" style="right:979px;top:160.98px;font:normal 16.61px/16.61px 'Liberation Mono', monospace;color:#ffffff;transform:scale(1.0,1.12);transform-origin:100% 12.72326px;-webkit-text-stroke:0.25px currentColor;">0.000 s</div>
<div class="t" style="right:979px;top:182.88px;font:normal 16.61px/16.61px 'Liberation Mono', monospace;color:#ffffff;transform:scale(1.0,1.12);transform-origin:100% 12.72326px;-webkit-text-stroke:0.25px currentColor;">100.000ns</div>
<div class="t" style="left:964px;top:160.98px;font:normal 16.61px/16.61px 'Liberation Mono', monospace;color:#1c9bd8;transform:scale(1.0,1.12);transform-origin:0 12.72326px;-webkit-text-stroke:0.25px currentColor;">Level</div>
<div class="t" style="right:743px;top:160.98px;font:normal 16.61px/16.61px 'Liberation Mono', monospace;color:#ffffff;transform:scale(1.0,1.12);transform-origin:100% 12.72326px;-webkit-text-stroke:0.25px currentColor;">0.000 V</div>
<div class="t" style="left:1049px;top:182.88px;font:normal 16.61px/16.61px 'Liberation Mono', monospace;color:#ffffff;transform:scale(1.0,1.12);transform-origin:0 12.72326px;-webkit-text-stroke:0.25px currentColor;">AUTO</div>
<div class="t" style="left:1129px;top:182.88px;font:normal 16.61px/16.61px 'Liberation Mono', monospace;color:#ffffff;transform:scale(1.0,1.12);transform-origin:0 12.72326px;-webkit-text-stroke:0.25px currentColor;">CH1</div>
<svg style="position:absolute;left:980px;top:175px" width="30" height="26" viewBox="980 175 30 26">
<path d="M987 196.5 L995.6 196.5 L995.6 181.5 L1004.2 181.5" fill="none" stroke="#fff" stroke-width="2.7"/>
<path d="M995.6 184.8 L1002.3 191.6 L988.9 191.6 Z" fill="#fff"/>
</svg>
<div style="position:absolute;left:936px;top:199px;width:240px;height:142px;box-sizing:border-box;background:rgba(0,0,0,.82);border:1.5px solid #4f7fc4;border-radius:3px;"></div>
<div style="position:absolute;left:939px;top:262px;width:234px;height:19px;box-sizing:border-box;background:#0b2a45;"></div>
<div class="t" style="left:976.5px;top:206.28px;font:normal 16.61px/16.61px 'Liberation Mono', monospace;color:#ffffff;transform:scale(1.0,1.12);transform-origin:0 12.72326px;-webkit-text-stroke:0.25px currentColor;">Vertical Cursors</div>
<div class="t" style="left:939.5px;top:228.70px;font:normal 13.19px/13.19px 'Liberation Mono', monospace;color:#ff2020;transform:scale(1.0,1.12);transform-origin:0 10.10354px;-webkit-text-stroke:0.25px currentColor;">Cur1</div>
<div class="t" style="right:819.7px;top:228.70px;font:normal 13.19px/13.19px 'Liberation Mono', monospace;color:#ffffff;transform:scale(1.0,1.12);transform-origin:100% 10.10354px;-webkit-text-stroke:0.25px currentColor;">0.000 V</div>
<div class="t" style="left:939.5px;top:247.70px;font:normal 13.19px/13.19px 'Liberation Mono', monospace;color:#00ff00;transform:scale(1.0,1.12);transform-origin:0 10.10354px;-webkit-text-stroke:0.25px currentColor;">Cur2</div>
<div class="t" style="right:819.7px;top:247.70px;font:normal 13.19px/13.19px 'Liberation Mono', monospace;color:#ffffff;transform:scale(1.0,1.12);transform-origin:100% 10.10354px;-webkit-text-stroke:0.25px currentColor;">-250.000mV</div>
<div class="t" style="left:939.5px;top:266.70px;font:normal 13.19px/13.19px 'Liberation Mono', monospace;color:#ff20ff;transform:scale(1.0,1.12);transform-origin:0 10.10354px;-webkit-text-stroke:0.25px currentColor;">Cur3</div>
<div class="t" style="right:819.7px;top:266.70px;font:normal 13.19px/13.19px 'Liberation Mono', monospace;color:#ffffff;transform:scale(1.0,1.12);transform-origin:100% 10.10354px;-webkit-text-stroke:0.25px currentColor;">-175.000mV</div>
<div class="t" style="left:939.5px;top:285.70px;font:normal 13.19px/13.19px 'Liberation Mono', monospace;color:#00ffff;transform:scale(1.0,1.12);transform-origin:0 10.10354px;-webkit-text-stroke:0.25px currentColor;">Cur4</div>
<div class="t" style="right:819.7px;top:285.70px;font:normal 13.19px/13.19px 'Liberation Mono', monospace;color:#ffffff;transform:scale(1.0,1.12);transform-origin:100% 10.10354px;-webkit-text-stroke:0.25px currentColor;">225.000mV</div>
<div class="t" style="left:939.5px;top:304.70px;font:normal 13.19px/13.19px 'Liberation Mono', monospace;color:#fff;transform:scale(1.0,1.12);transform-origin:0 10.10354px;-webkit-text-stroke:0.25px currentColor;">CurD</div>
<div class="t" style="right:819.7px;top:304.70px;font:normal 13.19px/13.19px 'Liberation Mono', monospace;color:#ffffff;transform:scale(1.0,1.12);transform-origin:100% 10.10354px;-webkit-text-stroke:0.25px currentColor;">150.000mV</div>
<div class="t" style="left:939.5px;top:323.70px;font:normal 13.19px/13.19px 'Liberation Mono', monospace;color:#fff;transform:scale(1.0,1.12);transform-origin:0 10.10354px;-webkit-text-stroke:0.25px currentColor;">&#916;Y</div>
<div class="t" style="right:819.7px;top:323.70px;font:normal 13.19px/13.19px 'Liberation Mono', monospace;color:#ffffff;transform:scale(1.0,1.12);transform-origin:100% 10.10354px;-webkit-text-stroke:0.25px currentColor;">325.000mV</div>
<div class="t" style="left:755.5px;width:1000px;text-align:center;top:174.16px;font:normal 18.07px/18.07px 'Liberation Mono', monospace;color:#ffffff;transform:scale(1.0,1.12);transform-origin:50% 13.84162px;-webkit-text-stroke:0.25px currentColor;">Vertical</div>
<div style="position:absolute;left:1179px;top:206.5px;width:154px;height:52.0px;box-sizing:border-box;border:2.6px solid #e3d43a;border-radius:9px;box-shadow:0 0 3px #e3d43a, inset 0 0 3px rgba(0,40,80,.6);background:#000;"></div>
<div class="t" style="left:756px;width:1000px;text-align:center;top:218.28px;font:normal 16.61px/16.61px 'Liberation Mono', monospace;color:#ffffff;transform:scale(1.0,1.12);transform-origin:50% 12.72326px;-webkit-text-stroke:0.25px currentColor;">Cursor V1</div>
<div class="t" style="left:756px;width:1000px;text-align:center;top:237.28px;font:normal 16.61px/16.61px 'Liberation Mono', monospace;color:#ffffff;transform:scale(1.0,1.12);transform-origin:50% 12.72326px;-webkit-text-stroke:0.25px currentColor;">ON</div>
<div style="position:absolute;left:1179px;top:265.5px;width:154px;height:52.0px;box-sizing:border-box;border:2.6px solid #e3d43a;border-radius:9px;box-shadow:0 0 3px #e3d43a, inset 0 0 3px rgba(0,40,80,.6);background:#000;"></div>
<div class="t" style="left:756px;width:1000px;text-align:center;top:277.28px;font:normal 16.61px/16.61px 'Liberation Mono', monospace;color:#ffffff;transform:scale(1.0,1.12);transform-origin:50% 12.72326px;-webkit-text-stroke:0.25px currentColor;">Cursor V2</div>
<div class="t" style="left:756px;width:1000px;text-align:center;top:296.28px;font:normal 16.61px/16.61px 'Liberation Mono', monospace;color:#ffffff;transform:scale(1.0,1.12);transform-origin:50% 12.72326px;-webkit-text-stroke:0.25px currentColor;">ON</div>
<div style="position:absolute;left:1179px;top:324.5px;width:154px;height:52.0px;box-sizing:border-box;border:2.6px solid #1ee61e;border-radius:9px;box-shadow:0 0 3px #1ee61e, inset 0 0 3px rgba(0,40,80,.6);background:#000;"></div>
<div class="t" style="left:756px;width:1000px;text-align:center;top:336.28px;font:normal 16.61px/16.61px 'Liberation Mono', monospace;color:#ffffff;transform:scale(1.0,1.12);transform-origin:50% 12.72326px;-webkit-text-stroke:0.25px currentColor;">Cursor V3</div>
<div class="t" style="left:756px;width:1000px;text-align:center;top:355.28px;font:normal 16.61px/16.61px 'Liberation Mono', monospace;color:#ffffff;transform:scale(1.0,1.12);transform-origin:50% 12.72326px;-webkit-text-stroke:0.25px currentColor;">ON</div>
<div style="position:absolute;left:1179px;top:383.5px;width:154px;height:52.0px;box-sizing:border-box;border:2.6px solid #e3d43a;border-radius:9px;box-shadow:0 0 3px #e3d43a, inset 0 0 3px rgba(0,40,80,.6);background:#000;"></div>
<div class="t" style="left:756px;width:1000px;text-align:center;top:395.28px;font:normal 16.61px/16.61px 'Liberation Mono', monospace;color:#ffffff;transform:scale(1.0,1.12);transform-origin:50% 12.72326px;-webkit-text-stroke:0.25px currentColor;">Cursor V4</div>
<div class="t" style="left:756px;width:1000px;text-align:center;top:414.28px;font:normal 16.61px/16.61px 'Liberation Mono', monospace;color:#ffffff;transform:scale(1.0,1.12);transform-origin:50% 12.72326px;-webkit-text-stroke:0.25px currentColor;">ON</div>
<div style="position:absolute;left:1179px;top:442.5px;width:154px;height:52.0px;box-sizing:border-box;border:2.6px solid #e3d43a;border-radius:9px;box-shadow:0 0 3px #e3d43a, inset 0 0 3px rgba(0,40,80,.6);background:#000;"></div>
<div class="t" style="left:756px;width:1000px;text-align:center;top:454.28px;font:normal 16.61px/16.61px 'Liberation Mono', monospace;color:#ffffff;transform:scale(1.0,1.12);transform-origin:50% 12.72326px;-webkit-text-stroke:0.25px currentColor;">Cursor &#916;V</div>
<div class="t" style="left:756px;width:1000px;text-align:center;top:473.28px;font:normal 16.61px/16.61px 'Liberation Mono', monospace;color:#ffffff;transform:scale(1.0,1.12);transform-origin:50% 12.72326px;-webkit-text-stroke:0.25px currentColor;">ON</div>
<div style="position:absolute;left:1179px;top:501.5px;width:154px;height:52.0px;box-sizing:border-box;border:2.6px solid #0a8ff0;border-radius:9px;box-shadow:0 0 3px #0a8ff0, inset 0 0 3px rgba(0,40,80,.6);background:#000;"></div>
<div class="t" style="left:756px;width:1000px;text-align:center;top:521.78px;font:normal 16.61px/16.61px 'Liberation Mono', monospace;color:#ffffff;transform:scale(1.0,1.12);transform-origin:50% 12.72326px;-webkit-text-stroke:0.25px currentColor;">Remove All</div>
<div style="position:absolute;left:1179px;top:560px;width:154px;height:52px;box-sizing:border-box;border:2.6px solid #0a8ff0;border-radius:9px;box-shadow:0 0 3px #0a8ff0, inset 0 0 3px rgba(0,40,80,.6);background:#000;"></div>
<div class="t" style="left:756px;width:1000px;text-align:center;top:571.28px;font:normal 16.61px/16.61px 'Liberation Mono', monospace;color:#ffffff;transform:scale(1.0,1.12);transform-origin:50% 12.72326px;-webkit-text-stroke:0.25px currentColor;">Cursor</div>
<div class="t" style="left:756px;width:1000px;text-align:center;top:590.28px;font:normal 16.61px/16.61px 'Liberation Mono', monospace;color:#ffffff;transform:scale(1.0,1.12);transform-origin:50% 12.72326px;-webkit-text-stroke:0.25px currentColor;">Horizontal</div>
<div style="position:absolute;left:1179px;top:969px;width:154px;height:52px;box-sizing:border-box;border:2.6px solid #0a8ff0;border-radius:9px;box-shadow:0 0 3px #0a8ff0, inset 0 0 3px rgba(0,40,80,.6);background:#000;"></div>
<div class="t" style="left:756px;width:1000px;text-align:center;top:985.76px;font:normal 18px/18px 'Liberation Sans', sans-serif;color:#ffffff;transform:scale(0.85,1.0);transform-origin:50% 15.2406px;">BACK</div>
<div class="t" style="left:89.5px;top:961.28px;font:normal 16.61px/16.61px 'Liberation Mono', monospace;color:#f5f500;transform:scale(1.0,1.12);transform-origin:0 12.72326px;-webkit-text-stroke:0.25px currentColor;">Channel 1</div>
<div class="t" style="left:6.5px;top:986.28px;font:normal 16.61px/16.61px 'Liberation Mono', monospace;color:#f5f500;transform:scale(1.0,1.12);transform-origin:0 12.72326px;-webkit-text-stroke:0.25px currentColor;">Scale</div>
<div class="t" style="left:106px;top:986.28px;font:normal 16.61px/16.61px 'Liberation Mono', monospace;color:#ffffff;transform:scale(1.0,1.12);transform-origin:0 12.72326px;-webkit-text-stroke:0.25px currentColor;">100mV/div</div>
<div class="t" style="left:6.5px;top:1006.78px;font:normal 16.61px/16.61px 'Liberation Mono', monospace;color:#f5f500;transform:scale(1.0,1.12);transform-origin:0 12.72326px;-webkit-text-stroke:0.25px currentColor;">Offset</div>
<div class="t" style="left:125.5px;top:1006.78px;font:normal 16.61px/16.61px 'Liberation Mono', monospace;color:#ffffff;transform:scale(1.0,1.12);transform-origin:0 12.72326px;-webkit-text-stroke:0.25px currentColor;">0.0 V</div>
<div class="t" style="left:392px;top:961.28px;font:normal 16.61px/16.61px 'Liberation Mono', monospace;color:#00e8f0;transform:scale(1.0,1.12);transform-origin:0 12.72326px;-webkit-text-stroke:0.25px currentColor;">Channel 2</div>
<div class="t" style="left:309.5px;top:986.28px;font:normal 16.61px/16.61px 'Liberation Mono', monospace;color:#00e8f0;transform:scale(1.0,1.12);transform-origin:0 12.72326px;-webkit-text-stroke:0.25px currentColor;">Scale</div>
<div class="t" style="left:409px;top:986.28px;font:normal 16.61px/16.61px 'Liberation Mono', monospace;color:#ffffff;transform:scale(1.0,1.12);transform-origin:0 12.72326px;-webkit-text-stroke:0.25px currentColor;">100mV/div</div>
<div class="t" style="left:309.5px;top:1006.78px;font:normal 16.61px/16.61px 'Liberation Mono', monospace;color:#00e8f0;transform:scale(1.0,1.12);transform-origin:0 12.72326px;-webkit-text-stroke:0.25px currentColor;">Offset</div>
<div class="t" style="left:428px;top:1006.78px;font:normal 16.61px/16.61px 'Liberation Mono', monospace;color:#ffffff;transform:scale(1.0,1.12);transform-origin:0 12.72326px;-webkit-text-stroke:0.25px currentColor;">0.0 V</div>
<div style="position:absolute;left:1346px;top:97px;width:85px;height:54px;box-sizing:border-box;background:linear-gradient(#b8f0a8 0px,#5fe04a 5px,#3ecf2a 40%,#33b820 75%,#2a9a1a 92%,#5ab050 100%);border-radius:5px;box-shadow:0 1px 1px rgba(0,0,0,.3);"></div>
<div class="t" style="left:888.5px;width:1000px;text-align:center;top:116.45px;font:bold 17px/17px 'Liberation Sans', sans-serif;color:#fff;transform:scale(0.95,1.0);transform-origin:50% 14.3939px;">Preset</div>
<div style="position:absolute;left:1435px;top:97px;width:85px;height:54px;box-sizing:border-box;background:linear-gradient(#a8a8a8 0px,#dcdcdc 1px,#d0d0d0 5px,#8c8c8c 8.5px,#808080 30%,#6c6c6c 62%,#565656 calc(100% - 6px),#545454 calc(100% - 4px),#858585 calc(100% - 1.5px),#9a9a9a 100%);border-radius:6px;"></div>
<div class="t" style="left:977.5px;width:1000px;text-align:center;top:116.45px;font:bold 17px/17px 'Liberation Sans', sans-serif;color:#fff;transform:scale(0.95,1.0);transform-origin:50% 14.3939px;">Auto</div>
<div style="position:absolute;left:1524px;top:97px;width:86px;height:54px;box-sizing:border-box;background:linear-gradient(#a8a8a8 0px,#dcdcdc 1px,#d0d0d0 5px,#8c8c8c 8.5px,#808080 30%,#6c6c6c 62%,#565656 calc(100% - 6px),#545454 calc(100% - 4px),#858585 calc(100% - 1.5px),#9a9a9a 100%);border-radius:6px;"></div>
<div class="t" style="left:1067.0px;width:1000px;text-align:center;top:110.10px;font:bold 14.5px/14.5px 'Liberation Sans', sans-serif;color:#fff;transform:scale(0.95,1.0);transform-origin:50% 12.27715px;">Run</div>
<div class="t" style="left:1067.0px;width:1000px;text-align:center;top:125.32px;font:bold 14.5px/14.5px 'Liberation Sans', sans-serif;color:#fff;transform:scale(0.95,1.0);transform-origin:50% 12.27715px;">Stop</div>
<div style="position:absolute;left:1614px;top:97px;width:86px;height:54px;box-sizing:border-box;background:linear-gradient(#a8a8a8 0px,#dcdcdc 1px,#d0d0d0 5px,#8c8c8c 8.5px,#808080 30%,#6c6c6c 62%,#565656 calc(100% - 6px),#545454 calc(100% - 4px),#858585 calc(100% - 1.5px),#9a9a9a 100%);border-radius:6px;"></div>
<div class="t" style="left:1157.0px;width:1000px;text-align:center;top:116.45px;font:bold 17px/17px 'Liberation Sans', sans-serif;color:#fff;transform:scale(0.95,1.0);transform-origin:50% 14.3939px;">Single</div>
<div style="position:absolute;left:1344px;top:155px;width:358px;height:243px;box-sizing:border-box;background:#fff;border:4px solid #a9a9a9;border-radius:8px;"></div>
<div class="t" style="left:1022px;width:1000px;text-align:center;top:168.22px;font:bold 21px/21px 'Liberation Sans', sans-serif;color:#333;">Trigger</div>
<div style="position:absolute;left:1354px;top:203px;width:110px;height:53px;box-sizing:border-box;background:linear-gradient(#fbfbfb 0px,#f6f6f6 15%,#ebebeb 35%,#e1e1e1 60%,#d3d3d3 80%,#c6c6c6 92%,#bdbdbd 100%);border-radius:6px;box-shadow:0 0.5px 1px rgba(0,0,0,.18);"></div>
<div class="t" style="left:909.0px;width:1000px;text-align:center;top:218.70px;font:bold 17.5px/17.5px 'Liberation Sans', sans-serif;color:#3c3c3c;transform:scale(0.95,1.0);transform-origin:50% 14.81725px;">Level</div>
<div style="position:absolute;left:1361px;top:248.5px;width:96px;height:3.5px;box-sizing:border-box;background:#e6c12e;border-radius:1.5px;"></div>
<div style="position:absolute;left:1468px;top:203px;width:110px;height:53px;box-sizing:border-box;background:linear-gradient(#fbfbfb 0px,#f6f6f6 15%,#ebebeb 35%,#e1e1e1 60%,#d3d3d3 80%,#c6c6c6 92%,#bdbdbd 100%);border-radius:6px;box-shadow:0 0.5px 1px rgba(0,0,0,.18);"></div>
<div class="t" style="left:1023.0px;width:1000px;text-align:center;top:218.70px;font:bold 17.5px/17.5px 'Liberation Sans', sans-serif;color:#3c3c3c;transform:scale(0.95,1.0);transform-origin:50% 14.81725px;">Offset</div>
<div style="position:absolute;left:1475px;top:248.5px;width:96px;height:3.5px;box-sizing:border-box;background:#777;border-radius:1.5px;"></div>
<div style="position:absolute;left:1582px;top:203px;width:110px;height:53px;box-sizing:border-box;background:linear-gradient(#fbfbfb 0px,#f6f6f6 15%,#ebebeb 35%,#e1e1e1 60%,#d3d3d3 80%,#c6c6c6 92%,#bdbdbd 100%);border-radius:6px;box-shadow:0 0.5px 1px rgba(0,0,0,.18);"></div>
<div class="t" style="left:1137.0px;width:1000px;text-align:center;top:218.70px;font:bold 17.5px/17.5px 'Liberation Sans', sans-serif;color:#3c3c3c;transform:scale(0.95,1.0);transform-origin:50% 14.81725px;">HoldOff</div>
<div style="position:absolute;left:1589px;top:248.5px;width:96px;height:3.5px;box-sizing:border-box;background:#777;border-radius:1.5px;"></div>
<div style="position:absolute;left:1354px;top:262px;width:110px;height:54px;box-sizing:border-box;background:linear-gradient(#fbfbfb 0px,#f6f6f6 15%,#ebebeb 35%,#e1e1e1 60%,#d3d3d3 80%,#c6c6c6 92%,#bdbdbd 100%);border-radius:6px;box-shadow:0 0.5px 1px rgba(0,0,0,.18);"></div>
<div class="t" style="left:909.0px;width:1000px;text-align:center;top:281.20px;font:bold 17.5px/17.5px 'Liberation Sans', sans-serif;color:#3c3c3c;transform:scale(0.95,1.0);transform-origin:50% 14.81725px;">Slope</div>
<div style="position:absolute;left:1468px;top:262px;width:110px;height:54px;box-sizing:border-box;background:linear-gradient(#fbfbfb 0px,#f6f6f6 15%,#ebebeb 35%,#e1e1e1 60%,#d3d3d3 80%,#c6c6c6 92%,#bdbdbd 100%);border-radius:6px;box-shadow:0 0.5px 1px rgba(0,0,0,.18);"></div>
<div class="t" style="left:1023.0px;width:1000px;text-align:center;top:281.20px;font:bold 17.5px/17.5px 'Liberation Sans', sans-serif;color:#3c3c3c;transform:scale(0.95,1.0);transform-origin:50% 14.81725px;">Mode</div>
<div style="position:absolute;left:1582px;top:262px;width:110px;height:54px;box-sizing:border-box;background:linear-gradient(#fbfbfb 0px,#f6f6f6 15%,#ebebeb 35%,#e1e1e1 60%,#d3d3d3 80%,#c6c6c6 92%,#bdbdbd 100%);border-radius:6px;box-shadow:0 0.5px 1px rgba(0,0,0,.18);"></div>
<div class="t" style="left:1137.0px;width:1000px;text-align:center;top:281.20px;font:bold 17.5px/17.5px 'Liberation Sans', sans-serif;color:#3c3c3c;transform:scale(0.95,1.0);transform-origin:50% 14.81725px;">Source</div>
<div style="position:absolute;left:1394px;top:331px;width:30px;height:19px;box-sizing:border-box;background:#88f56a;"></div>
<div style="position:absolute;left:1503px;top:331px;width:40px;height:19px;box-sizing:border-box;background:#88f56a;"></div>
<div style="position:absolute;left:1580px;top:331px;width:57px;height:19px;box-sizing:border-box;background:#88f56a;"></div>
<div class="t" style="left:909px;width:1000px;text-align:center;top:336.28px;font:normal 16.61px/16.61px 'Liberation Mono', monospace;color:#555;transform:scale(1.0,1.12);transform-origin:50% 12.72326px;-webkit-text-stroke:0.25px currentColor;">Pos</div>
<div class="t" style="left:909px;width:1000px;text-align:center;top:356.28px;font:normal 16.61px/16.61px 'Liberation Mono', monospace;color:#555;transform:scale(1.0,1.12);transform-origin:50% 12.72326px;-webkit-text-stroke:0.25px currentColor;">Neg</div>
<div class="t" style="left:909px;width:1000px;text-align:center;top:376.28px;font:normal 16.61px/16.61px 'Liberation Mono', monospace;color:#555;transform:scale(1.0,1.12);transform-origin:50% 12.72326px;-webkit-text-stroke:0.25px currentColor;">Both</div>
<div class="t" style="left:1023px;width:1000px;text-align:center;top:336.28px;font:normal 16.61px/16.61px 'Liberation Mono', monospace;color:#555;transform:scale(1.0,1.12);transform-origin:50% 12.72326px;-webkit-text-stroke:0.25px currentColor;">Auto</div>
<div class="t" style="left:1023px;width:1000px;text-align:center;top:356.28px;font:normal 16.61px/16.61px 'Liberation Mono', monospace;color:#555;transform:scale(1.0,1.12);transform-origin:50% 12.72326px;-webkit-text-stroke:0.25px currentColor;">Norm</div>
<div class="t" style="left:1108px;width:1000px;text-align:center;top:336.28px;font:normal 16.61px/16.61px 'Liberation Mono', monospace;color:#555;transform:scale(1.0,1.12);transform-origin:50% 12.72326px;-webkit-text-stroke:0.25px currentColor;">1</div>
<div class="t" style="left:1165px;width:1000px;text-align:center;top:336.28px;font:normal 16.61px/16.61px 'Liberation Mono', monospace;color:#555;transform:scale(1.0,1.12);transform-origin:50% 12.72326px;-webkit-text-stroke:0.25px currentColor;">2</div>
<div class="t" style="left:1108px;width:1000px;text-align:center;top:356.28px;font:normal 16.61px/16.61px 'Liberation Mono', monospace;color:#555;transform:scale(1.0,1.12);transform-origin:50% 12.72326px;-webkit-text-stroke:0.25px currentColor;">3</div>
<div class="t" style="left:1165px;width:1000px;text-align:center;top:356.28px;font:normal 16.61px/16.61px 'Liberation Mono', monospace;color:#555;transform:scale(1.0,1.12);transform-origin:50% 12.72326px;-webkit-text-stroke:0.25px currentColor;">4</div>
<div class="t" style="left:1137px;width:1000px;text-align:center;top:376.28px;font:normal 16.61px/16.61px 'Liberation Mono', monospace;color:#555;transform:scale(1.0,1.12);transform-origin:50% 12.72326px;-webkit-text-stroke:0.25px currentColor;">Line</div>
<div style="position:absolute;left:1707px;top:94px;width:210px;height:196.5px;box-sizing:border-box;background:#fff;border:4px solid #a9a9a9;border-radius:8px;"></div>
<div style="position:absolute;left:1717px;top:104px;width:94px;height:53px;box-sizing:border-box;background:linear-gradient(#fbfbfb 0px,#f6f6f6 15%,#ebebeb 35%,#e1e1e1 60%,#d3d3d3 80%,#c6c6c6 92%,#bdbdbd 100%);border-radius:6px;box-shadow:0 0.5px 1px rgba(0,0,0,.18);"></div>
<div class="t" style="left:1264.0px;width:1000px;text-align:center;top:123.05px;font:bold 16.8px/16.8px 'Liberation Sans', sans-serif;color:#3c3c3c;transform:scale(0.95,1.0);transform-origin:50% 14.22456px;">Measure</div>
<div style="position:absolute;left:1814px;top:104px;width:96px;height:53px;box-sizing:border-box;background:linear-gradient(#fbfbfb 0px,#f6f6f6 15%,#ebebeb 35%,#e1e1e1 60%,#d3d3d3 80%,#c6c6c6 92%,#bdbdbd 100%);border-radius:6px;box-shadow:0 0.5px 1px rgba(0,0,0,.18);"></div>
<div class="t" style="left:1362.0px;width:1000px;text-align:center;top:123.96px;font:bold 15px/15px 'Liberation Sans', sans-serif;color:#3c3c3c;transform:scale(0.95,1.0);transform-origin:50% 12.7005px;">Acquisition</div>
<div style="position:absolute;left:1717px;top:162px;width:94px;height:51px;box-sizing:border-box;background:linear-gradient(#fbfbfb 0px,#f6f6f6 15%,#ebebeb 35%,#e1e1e1 60%,#d3d3d3 80%,#c6c6c6 92%,#bdbdbd 100%);border-radius:6px;box-shadow:0 0.5px 1px rgba(0,0,0,.18);"></div>
<div class="t" style="left:1264.0px;width:1000px;text-align:center;top:180.05px;font:bold 16.8px/16.8px 'Liberation Sans', sans-serif;color:#3c3c3c;transform:scale(0.95,1.0);transform-origin:50% 14.22456px;">Display</div>
<div style="position:absolute;left:1814px;top:162px;width:96px;height:51px;box-sizing:border-box;background:linear-gradient(#fbfbfb 0px,#f6f6f6 15%,#ebebeb 35%,#e1e1e1 60%,#d3d3d3 80%,#c6c6c6 92%,#bdbdbd 100%);border-radius:6px;box-shadow:0 0.5px 1px rgba(0,0,0,.18);"></div>
<div class="t" style="left:1362.0px;width:1000px;text-align:center;top:180.05px;font:bold 16.8px/16.8px 'Liberation Sans', sans-serif;color:#3c3c3c;transform:scale(0.95,1.0);transform-origin:50% 14.22456px;">System</div>
<div style="position:absolute;left:1717px;top:219px;width:94px;height:61px;box-sizing:border-box;background:linear-gradient(#fbfbfb 0px,#f6f6f6 15%,#ebebeb 35%,#e1e1e1 60%,#d3d3d3 80%,#c6c6c6 92%,#bdbdbd 100%);border-radius:6px;box-shadow:0 0.5px 1px rgba(0,0,0,.18);"></div>
<div class="t" style="left:1264.0px;width:1000px;text-align:center;top:242.05px;font:bold 16.8px/16.8px 'Liberation Sans', sans-serif;color:#3c3c3c;transform:scale(0.95,1.0);transform-origin:50% 14.22456px;">Utility</div>
<div style="position:absolute;left:1814px;top:219px;width:96px;height:61px;box-sizing:border-box;background:linear-gradient(#fbfbfb 0px,#f6f6f6 15%,#ebebeb 35%,#e1e1e1 60%,#d3d3d3 80%,#c6c6c6 92%,#bdbdbd 100%);border-radius:6px;box-shadow:0 0.5px 1px rgba(0,0,0,.18);"></div>
<div class="t" style="left:1362.0px;width:1000px;text-align:center;top:235.60px;font:bold 14.5px/14.5px 'Liberation Sans', sans-serif;color:#3c3c3c;transform:scale(0.95,1.0);transform-origin:50% 12.27715px;">Memory</div>
<div class="t" style="left:1362.0px;width:1000px;text-align:center;top:250.82px;font:bold 14.5px/14.5px 'Liberation Sans', sans-serif;color:#3c3c3c;transform:scale(0.95,1.0);transform-origin:50% 12.27715px;">Depth</div>
<div style="position:absolute;left:1707px;top:290.5px;width:210px;height:106.5px;box-sizing:border-box;background:#fff;border:4px solid #a9a9a9;border-radius:8px;"></div>
<div class="t" style="left:1312px;width:1000px;text-align:center;top:302.91px;font:bold 19px/19px 'Liberation Sans', sans-serif;color:#5c5c5c;">Mode</div>
<div style="position:absolute;left:1717px;top:329px;width:93px;height:59px;box-sizing:border-box;background:linear-gradient(#a8a8a8 0px,#dcdcdc 1px,#d0d0d0 5px,#8c8c8c 8.5px,#808080 30%,#6c6c6c 62%,#565656 calc(100% - 6px),#545454 calc(100% - 4px),#858585 calc(100% - 1.5px),#9a9a9a 100%);border-radius:6px;"></div>
<div class="t" style="left:1263.5px;width:1000px;text-align:center;top:348.05px;font:bold 16.8px/16.8px 'Liberation Sans', sans-serif;color:#fff;transform:scale(0.95,1.0);transform-origin:50% 14.22456px;">Cursors</div>
<div style="position:absolute;left:1724px;top:380.5px;width:79px;height:3.5px;box-sizing:border-box;background:#e6c12e;border-radius:1.5px;"></div>
<div style="position:absolute;left:1814px;top:329px;width:94px;height:59px;box-sizing:border-box;background:linear-gradient(#a8a8a8 0px,#dcdcdc 1px,#d0d0d0 5px,#8c8c8c 8.5px,#808080 30%,#6c6c6c 62%,#565656 calc(100% - 6px),#545454 calc(100% - 4px),#858585 calc(100% - 1.5px),#9a9a9a 100%);border-radius:6px;"></div>
<div class="t" style="left:1361.0px;width:1000px;text-align:center;top:348.05px;font:bold 16.8px/16.8px 'Liberation Sans', sans-serif;color:#fff;transform:scale(0.95,1.0);transform-origin:50% 14.22456px;">Intensity</div>
<div style="position:absolute;left:1821px;top:380.5px;width:80px;height:3.5px;box-sizing:border-box;background:#707070;border-radius:1.5px;"></div>
<div style="position:absolute;left:1346px;top:472px;width:147px;height:66px;box-sizing:border-box;background:linear-gradient(#a8a8a8 0px,#dcdcdc 1px,#d0d0d0 5px,#8c8c8c 8.5px,#808080 30%,#6c6c6c 62%,#565656 calc(100% - 6px),#545454 calc(100% - 4px),#858585 calc(100% - 1.5px),#9a9a9a 100%);border-radius:6px;"></div>
<div class="t" style="left:919.5px;width:1000px;text-align:center;top:494.20px;font:bold 17.5px/17.5px 'Liberation Sans', sans-serif;color:#fff;transform:scale(0.95,1.0);transform-origin:50% 14.81725px;">Vertical</div>
<div style="position:absolute;left:1353px;top:530.5px;width:133px;height:3.5px;box-sizing:border-box;background:#6e6e6e;border-radius:1.5px;"></div>
<div style="position:absolute;left:1346px;top:545px;width:147px;height:67px;box-sizing:border-box;background:linear-gradient(#a8a8a8 0px,#dcdcdc 1px,#d0d0d0 5px,#8c8c8c 8.5px,#808080 30%,#6c6c6c 62%,#565656 calc(100% - 6px),#545454 calc(100% - 4px),#858585 calc(100% - 1.5px),#9a9a9a 100%);border-radius:6px;"></div>
<div class="t" style="left:919.5px;width:1000px;text-align:center;top:567.70px;font:bold 17.5px/17.5px 'Liberation Sans', sans-serif;color:#fff;transform:scale(0.95,1.0);transform-origin:50% 14.81725px;">Horizontal</div>
<div style="position:absolute;left:1353px;top:604.5px;width:133px;height:3.5px;box-sizing:border-box;background:#6e6e6e;border-radius:1.5px;"></div>
<div style="position:absolute;left:1346px;top:618px;width:147px;height:68px;box-sizing:border-box;background:linear-gradient(#a8a8a8 0px,#dcdcdc 1px,#d0d0d0 5px,#8c8c8c 8.5px,#808080 30%,#6c6c6c 62%,#565656 calc(100% - 6px),#545454 calc(100% - 4px),#858585 calc(100% - 1.5px),#9a9a9a 100%);border-radius:6px;"></div>
<div class="t" style="left:919.5px;width:1000px;text-align:center;top:641.20px;font:bold 17.5px/17.5px 'Liberation Sans', sans-serif;color:#fff;transform:scale(0.95,1.0);transform-origin:50% 14.81725px;">Trigger</div>
<div style="position:absolute;left:1353px;top:678.5px;width:133px;height:3.5px;box-sizing:border-box;background:#6e6e6e;border-radius:1.5px;"></div>
<svg style="position:absolute;left:1490px;top:410px" width="340" height="340" viewBox="1490 410 340 340">
<defs>
<radialGradient id="kb" cx="1685" cy="560" r="175" gradientUnits="userSpaceOnUse"><stop offset="0" stop-color="#e9e9e9"/><stop offset=".45" stop-color="#e3e3e3"/><stop offset=".8" stop-color="#d6d6d6"/><stop offset="1" stop-color="#cdcdcd"/></radialGradient>
<linearGradient id="kl" x1="1520" y1="440" x2="1640" y2="760" gradientUnits="userSpaceOnUse"><stop offset="0" stop-color="#fdfdfd"/><stop offset=".6" stop-color="#f9f9f9"/><stop offset="1" stop-color="#f2f2f2" stop-opacity=".35"/></linearGradient>
<radialGradient id="ke" cx="1660.5" cy="579" r="156" gradientUnits="userSpaceOnUse"><stop offset=".94" stop-color="#000" stop-opacity="0"/><stop offset="1" stop-color="#000" stop-opacity=".07"/></radialGradient>
<clipPath id="kc"><circle cx="1660.5" cy="579" r="156"/></clipPath>
<filter id="kbl2" x="-30%" y="-30%" width="160%" height="160%"><feGaussianBlur stdDeviation="11"/></filter>
<filter id="kbr" x="-10%" y="-10%" width="120%" height="120%"><feGaussianBlur stdDeviation="0.8"/></filter>
<linearGradient id="dm" x1="1745" y1="492" x2="1770" y2="522" gradientUnits="userSpaceOnUse"><stop offset="0" stop-color="#dcdcdc"/><stop offset=".45" stop-color="#b9b9b9"/><stop offset=".75" stop-color="#a8a8a8"/><stop offset="1" stop-color="#d0d0d0"/></linearGradient>
</defs>
<circle cx="1660.5" cy="579" r="159.5" fill="#f8f8f8"/>
<g clip-path="url(#kc)">
<circle cx="1660.5" cy="579" r="156" fill="url(#kb)"/>
<path fill-rule="evenodd" fill="url(#kl)" filter="url(#kbl2)" d="M1460 380 L1870 380 L1870 780 L1460 780 Z M1906 582 A171 172 0 1 0 1564 582 A171 172 0 1 0 1906 582 Z"/>
<ellipse cx="1650" cy="725" rx="120" ry="38" fill="#bcbcbc" opacity=".5" filter="url(#kbl2)"/>
<circle cx="1660.5" cy="579" r="156" fill="url(#ke)"/>
</g>
<circle cx="1660.5" cy="579" r="157" fill="none" stroke="#c2c2c2" stroke-width="2" filter="url(#kbr)"/>
<circle cx="1757.6" cy="506.7" r="20" fill="#f2f2f2"/>
<circle cx="1757.1" cy="506.2" r="19.2" fill="#6f6f6f"/>
<circle cx="1757.6" cy="506.7" r="18.4" fill="url(#dm)"/>
</svg>
<div style="position:absolute;left:1829px;top:483px;width:87px;height:60px;box-sizing:border-box;background:linear-gradient(#a8a8a8 0px,#dcdcdc 1px,#d0d0d0 5px,#8c8c8c 8.5px,#808080 30%,#6c6c6c 62%,#565656 calc(100% - 6px),#545454 calc(100% - 4px),#858585 calc(100% - 1.5px),#9a9a9a 100%);border-radius:6px;"></div>
<div class="t" style="left:1372.5px;width:1000px;text-align:center;top:505.45px;font:bold 17px/17px 'Liberation Sans', sans-serif;color:#fff;transform:scale(0.95,1.0);transform-origin:50% 14.3939px;"></div>
<svg style="position:absolute;left:1860px;top:502px" width="26" height="20" viewBox="0 0 26 20"><path d="M13 3 L22 11 L17 11 L17 17 L9 17 L9 11 L4 11 Z" fill="#fff"/></svg>
<div style="position:absolute;left:1829px;top:550px;width:88px;height:60px;box-sizing:border-box;background:linear-gradient(#fbfbfb 0px,#f6f6f6 15%,#ebebeb 35%,#e1e1e1 60%,#d3d3d3 80%,#c6c6c6 92%,#bdbdbd 100%);border-radius:6px;box-shadow:0 0.5px 1px rgba(0,0,0,.18);"></div>
<div class="t" style="left:1373.0px;width:1000px;text-align:center;top:566.95px;font:bold 18px/18px 'Liberation Sans', sans-serif;color:#3a3a3a;transform:scale(0.95,1.0);transform-origin:50% 15.2406px;">F</div>
<div style="position:absolute;left:1836px;top:602.5px;width:74px;height:3.5px;box-sizing:border-box;background:#8a8a8a;border-radius:1.5px;"></div>
<div style="position:absolute;left:1829px;top:615px;width:87px;height:60px;box-sizing:border-box;background:linear-gradient(#a8a8a8 0px,#dcdcdc 1px,#d0d0d0 5px,#8c8c8c 8.5px,#808080 30%,#6c6c6c 62%,#565656 calc(100% - 6px),#545454 calc(100% - 4px),#858585 calc(100% - 1.5px),#9a9a9a 100%);border-radius:6px;"></div>
<div class="t" style="left:1372.5px;width:1000px;text-align:center;top:637.45px;font:bold 17px/17px 'Liberation Sans', sans-serif;color:#fff;transform:scale(0.95,1.0);transform-origin:50% 14.3939px;"></div>
<svg style="position:absolute;left:1860px;top:636px" width="26" height="20" viewBox="0 0 26 20"><path d="M13 17 L22 9 L17 9 L17 3 L9 3 L9 9 L4 9 Z" fill="#fff"/></svg>
<div style="position:absolute;left:1460px;top:774px;width:111px;height:52px;box-sizing:border-box;background:linear-gradient(#fbfbfb 0px,#f6f6f6 15%,#ebebeb 35%,#e1e1e1 60%,#d3d3d3 80%,#c6c6c6 92%,#bdbdbd 100%);border-radius:6px;box-shadow:0 0.5px 1px rgba(0,0,0,.18);"></div>
<div class="t" style="left:1015.5px;width:1000px;text-align:center;top:788.95px;font:bold 17px/17px 'Liberation Sans', sans-serif;color:#3c3c3c;transform:scale(0.95,1.0);transform-origin:50% 14.3939px;">Scale</div>
<div style="position:absolute;left:1467px;top:818.5px;width:97px;height:3.5px;box-sizing:border-box;background:#e6c12e;border-radius:1.5px;"></div>
<div style="position:absolute;left:1575px;top:774px;width:111px;height:52px;box-sizing:border-box;background:linear-gradient(#fbfbfb 0px,#f6f6f6 15%,#ebebeb 35%,#e1e1e1 60%,#d3d3d3 80%,#c6c6c6 92%,#bdbdbd 100%);border-radius:6px;box-shadow:0 0.5px 1px rgba(0,0,0,.18);"></div>
<div class="t" style="left:1130.5px;width:1000px;text-align:center;top:788.95px;font:bold 17px/17px 'Liberation Sans', sans-serif;color:#3c3c3c;transform:scale(0.95,1.0);transform-origin:50% 14.3939px;">Offset</div>
<div style="position:absolute;left:1582px;top:818.5px;width:97px;height:3.5px;box-sizing:border-box;background:#777;border-radius:1.5px;"></div>
<div style="position:absolute;left:1690px;top:774px;width:112px;height:55px;box-sizing:border-box;background:linear-gradient(#fbfbfb 0px,#f6f6f6 15%,#ebebeb 35%,#e1e1e1 60%,#d3d3d3 80%,#c6c6c6 92%,#bdbdbd 100%);border-radius:6px;box-shadow:0 0.5px 1px rgba(0,0,0,.18);"></div>
<div class="t" style="left:1246.0px;width:1000px;text-align:center;top:793.95px;font:bold 17px/17px 'Liberation Sans', sans-serif;color:#3c3c3c;transform:scale(0.95,1.0);transform-origin:50% 14.3939px;">Zero</div>
<div style="position:absolute;left:1344px;top:839px;width:121px;height:129px;box-sizing:border-box;background:#fff;border:2px solid #a9a9a9;border-radius:6px;"></div>
<div style="position:absolute;left:1348.5px;top:845px;width:53.5px;height:55px;box-sizing:border-box;background:linear-gradient(#a8a8a8 0px,#dcdcdc 1px,#d0d0d0 5px,#8c8c8c 8.5px,#808080 30%,#6c6c6c 62%,#565656 calc(100% - 6px),#545454 calc(100% - 4px),#858585 calc(100% - 1.5px),#9a9a9a 100%);border-radius:6px;border-radius:6px;box-shadow:0 1px 2px rgba(0,0,0,.25);"></div>
<div style="position:absolute;left:1405.5px;top:845px;width:54.0px;height:55px;box-sizing:border-box;background:linear-gradient(#a8a8a8 0px,#dcdcdc 1px,#d0d0d0 5px,#8c8c8c 8.5px,#808080 30%,#6c6c6c 62%,#565656 calc(100% - 6px),#545454 calc(100% - 4px),#858585 calc(100% - 1.5px),#9a9a9a 100%);border-radius:6px;border-radius:6px;box-shadow:0 1px 2px rgba(0,0,0,.25);"></div>
<div style="position:absolute;left:1359.3999999999999px;top:905px;width:21.800000000000182px;height:29px;box-sizing:border-box;background:#88f56a;"></div>
<div style="position:absolute;left:1405.8px;top:905px;width:43.80000000000018px;height:29px;box-sizing:border-box;background:#88f56a;"></div>
<div class="t" style="left:870.3px;width:1000px;text-align:center;top:912.38px;font:normal 18.17px/18.17px 'Liberation Mono', monospace;color:#555;transform:scale(1.0,1.12);transform-origin:50% 13.918220000000002px;-webkit-text-stroke:0.25px currentColor;">AC</div>
<div class="t" style="left:927.7px;width:1000px;text-align:center;top:912.38px;font:normal 18.17px/18.17px 'Liberation Mono', monospace;color:#555;transform:scale(1.0,1.12);transform-origin:50% 13.918220000000002px;-webkit-text-stroke:0.25px currentColor;">Hi-Z</div>
<div class="t" style="left:870.3px;width:1000px;text-align:center;top:941.58px;font:normal 18.17px/18.17px 'Liberation Mono', monospace;color:#555;transform:scale(1.0,1.12);transform-origin:50% 13.918220000000002px;-webkit-text-stroke:0.25px currentColor;">DC</div>
<div class="t" style="left:927.7px;width:1000px;text-align:center;top:939.88px;font:normal 18.17px/18.17px 'Liberation Mono', monospace;color:#555;transform:scale(1.0,1.12);transform-origin:50% 13.918220000000002px;-webkit-text-stroke:0.25px currentColor;">50 &#937;</div>
<div style="position:absolute;left:1466px;top:839px;width:119px;height:129px;box-sizing:border-box;background:#fff;border:2px solid #a9a9a9;border-radius:6px;"></div>
<div style="position:absolute;left:1470.5px;top:845px;width:53.5px;height:55px;box-sizing:border-box;background:linear-gradient(#a8a8a8 0px,#dcdcdc 1px,#d0d0d0 5px,#8c8c8c 8.5px,#808080 30%,#6c6c6c 62%,#565656 calc(100% - 6px),#545454 calc(100% - 4px),#858585 calc(100% - 1.5px),#9a9a9a 100%);border-radius:6px;border-radius:6px;box-shadow:0 1px 2px rgba(0,0,0,.25);"></div>
<div style="position:absolute;left:1527.5px;top:845px;width:52.0px;height:55px;box-sizing:border-box;background:linear-gradient(#a8a8a8 0px,#dcdcdc 1px,#d0d0d0 5px,#8c8c8c 8.5px,#808080 30%,#6c6c6c 62%,#565656 calc(100% - 6px),#545454 calc(100% - 4px),#858585 calc(100% - 1.5px),#9a9a9a 100%);border-radius:6px;border-radius:6px;box-shadow:0 1px 2px rgba(0,0,0,.25);"></div>
<div style="position:absolute;left:1481.3999999999999px;top:905px;width:21.800000000000182px;height:29px;box-sizing:border-box;background:#88f56a;"></div>
<div style="position:absolute;left:1527.8px;top:905px;width:43.80000000000018px;height:29px;box-sizing:border-box;background:#88f56a;"></div>
<div class="t" style="left:992.3px;width:1000px;text-align:center;top:912.38px;font:normal 18.17px/18.17px 'Liberation Mono', monospace;color:#555;transform:scale(1.0,1.12);transform-origin:50% 13.918220000000002px;-webkit-text-stroke:0.25px currentColor;">AC</div>
<div class="t" style="left:1049.7px;width:1000px;text-align:center;top:912.38px;font:normal 18.17px/18.17px 'Liberation Mono', monospace;color:#555;transform:scale(1.0,1.12);transform-origin:50% 13.918220000000002px;-webkit-text-stroke:0.25px currentColor;">Hi-Z</div>
<div class="t" style="left:992.3px;width:1000px;text-align:center;top:941.58px;font:normal 18.17px/18.17px 'Liberation Mono', monospace;color:#555;transform:scale(1.0,1.12);transform-origin:50% 13.918220000000002px;-webkit-text-stroke:0.25px currentColor;">DC</div>
<div class="t" style="left:1049.7px;width:1000px;text-align:center;top:939.88px;font:normal 18.17px/18.17px 'Liberation Mono', monospace;color:#555;transform:scale(1.0,1.12);transform-origin:50% 13.918220000000002px;-webkit-text-stroke:0.25px currentColor;">50 &#937;</div>
<div style="position:absolute;left:1588px;top:839px;width:84px;height:129px;box-sizing:border-box;background:#fff;border:2px solid #a9a9a9;border-radius:6px;"></div>
<div style="position:absolute;left:1591px;top:845px;width:78px;height:56px;box-sizing:border-box;background:linear-gradient(#fbfbfb 0px,#f6f6f6 15%,#ebebeb 35%,#e1e1e1 60%,#d3d3d3 80%,#c6c6c6 92%,#bdbdbd 100%);border-radius:6px;box-shadow:0 0.5px 1px rgba(0,0,0,.18);"></div>
<div class="t" style="left:1130.0px;width:1000px;text-align:center;top:861.45px;font:bold 19px/19px 'Liberation Sans', sans-serif;color:#3c3c3c;transform:scale(0.95,1.0);transform-origin:50% 16.0873px;">XY</div>
<div style="position:absolute;left:1598px;top:893.5px;width:64px;height:3.5px;box-sizing:border-box;background:#8a8a8a;border-radius:1.5px;"></div>
<div style="position:absolute;left:1591px;top:907px;width:78px;height:55px;box-sizing:border-box;background:linear-gradient(#fbfbfb 0px,#f6f6f6 15%,#ebebeb 35%,#e1e1e1 60%,#d3d3d3 80%,#c6c6c6 92%,#bdbdbd 100%);border-radius:6px;box-shadow:0 0.5px 1px rgba(0,0,0,.18);"></div>
<div class="t" style="left:1130.0px;width:1000px;text-align:center;top:926.95px;font:bold 17px/17px 'Liberation Sans', sans-serif;color:#3c3c3c;transform:scale(0.95,1.0);transform-origin:50% 14.3939px;">MATH</div>
<div style="position:absolute;left:1674px;top:839px;width:120px;height:129px;box-sizing:border-box;background:#fff;border:2px solid #a9a9a9;border-radius:6px;"></div>
<div style="position:absolute;left:1678.5px;top:845px;width:53.5px;height:55px;box-sizing:border-box;background:linear-gradient(#a8a8a8 0px,#dcdcdc 1px,#d0d0d0 5px,#8c8c8c 8.5px,#808080 30%,#6c6c6c 62%,#565656 calc(100% - 6px),#545454 calc(100% - 4px),#858585 calc(100% - 1.5px),#9a9a9a 100%);border-radius:6px;border-radius:6px;box-shadow:0 1px 2px rgba(0,0,0,.25);"></div>
<div style="position:absolute;left:1735.5px;top:845px;width:53.0px;height:55px;box-sizing:border-box;background:linear-gradient(#a8a8a8 0px,#dcdcdc 1px,#d0d0d0 5px,#8c8c8c 8.5px,#808080 30%,#6c6c6c 62%,#565656 calc(100% - 6px),#545454 calc(100% - 4px),#858585 calc(100% - 1.5px),#9a9a9a 100%);border-radius:6px;border-radius:6px;box-shadow:0 1px 2px rgba(0,0,0,.25);"></div>
<div style="position:absolute;left:1689.3999999999999px;top:905px;width:21.800000000000182px;height:29px;box-sizing:border-box;background:#88f56a;"></div>
<div style="position:absolute;left:1735.8px;top:905px;width:43.80000000000018px;height:29px;box-sizing:border-box;background:#88f56a;"></div>
<div class="t" style="left:1200.3px;width:1000px;text-align:center;top:912.38px;font:normal 18.17px/18.17px 'Liberation Mono', monospace;color:#555;transform:scale(1.0,1.12);transform-origin:50% 13.918220000000002px;-webkit-text-stroke:0.25px currentColor;">AC</div>
<div class="t" style="left:1257.7px;width:1000px;text-align:center;top:912.38px;font:normal 18.17px/18.17px 'Liberation Mono', monospace;color:#555;transform:scale(1.0,1.12);transform-origin:50% 13.918220000000002px;-webkit-text-stroke:0.25px currentColor;">Hi-Z</div>
<div class="t" style="left:1200.3px;width:1000px;text-align:center;top:941.58px;font:normal 18.17px/18.17px 'Liberation Mono', monospace;color:#555;transform:scale(1.0,1.12);transform-origin:50% 13.918220000000002px;-webkit-text-stroke:0.25px currentColor;">DC</div>
<div class="t" style="left:1257.7px;width:1000px;text-align:center;top:939.88px;font:normal 18.17px/18.17px 'Liberation Mono', monospace;color:#555;transform:scale(1.0,1.12);transform-origin:50% 13.918220000000002px;-webkit-text-stroke:0.25px currentColor;">50 &#937;</div>
<div style="position:absolute;left:1796px;top:839px;width:121px;height:129px;box-sizing:border-box;background:#fff;border:2px solid #a9a9a9;border-radius:6px;"></div>
<div style="position:absolute;left:1800.5px;top:845px;width:53.5px;height:55px;box-sizing:border-box;background:linear-gradient(#a8a8a8 0px,#dcdcdc 1px,#d0d0d0 5px,#8c8c8c 8.5px,#808080 30%,#6c6c6c 62%,#565656 calc(100% - 6px),#545454 calc(100% - 4px),#858585 calc(100% - 1.5px),#9a9a9a 100%);border-radius:6px;border-radius:6px;box-shadow:0 1px 2px rgba(0,0,0,.25);"></div>
<div style="position:absolute;left:1857.5px;top:845px;width:54.0px;height:55px;box-sizing:border-box;background:linear-gradient(#a8a8a8 0px,#dcdcdc 1px,#d0d0d0 5px,#8c8c8c 8.5px,#808080 30%,#6c6c6c 62%,#565656 calc(100% - 6px),#545454 calc(100% - 4px),#858585 calc(100% - 1.5px),#9a9a9a 100%);border-radius:6px;border-radius:6px;box-shadow:0 1px 2px rgba(0,0,0,.25);"></div>
<div style="position:absolute;left:1811.3999999999999px;top:905px;width:21.800000000000182px;height:29px;box-sizing:border-box;background:#88f56a;"></div>
<div style="position:absolute;left:1857.8px;top:905px;width:43.80000000000018px;height:29px;box-sizing:border-box;background:#88f56a;"></div>
<div class="t" style="left:1322.3px;width:1000px;text-align:center;top:912.38px;font:normal 18.17px/18.17px 'Liberation Mono', monospace;color:#555;transform:scale(1.0,1.12);transform-origin:50% 13.918220000000002px;-webkit-text-stroke:0.25px currentColor;">AC</div>
<div class="t" style="left:1379.7px;width:1000px;text-align:center;top:912.38px;font:normal 18.17px/18.17px 'Liberation Mono', monospace;color:#555;transform:scale(1.0,1.12);transform-origin:50% 13.918220000000002px;-webkit-text-stroke:0.25px currentColor;">Hi-Z</div>
<div class="t" style="left:1322.3px;width:1000px;text-align:center;top:941.58px;font:normal 18.17px/18.17px 'Liberation Mono', monospace;color:#555;transform:scale(1.0,1.12);transform-origin:50% 13.918220000000002px;-webkit-text-stroke:0.25px currentColor;">DC</div>
<div class="t" style="left:1379.7px;width:1000px;text-align:center;top:939.88px;font:normal 18.17px/18.17px 'Liberation Mono', monospace;color:#555;transform:scale(1.0,1.12);transform-origin:50% 13.918220000000002px;-webkit-text-stroke:0.25px currentColor;">50 &#937;</div>
<div style="position:absolute;left:1346px;top:971px;width:139px;height:53px;box-sizing:border-box;background:linear-gradient(#a8a8a8 0px,#dcdcdc 1px,#d0d0d0 5px,#8c8c8c 8.5px,#808080 30%,#6c6c6c 62%,#565656 calc(100% - 6px),#545454 calc(100% - 4px),#858585 calc(100% - 1.5px),#9a9a9a 100%);border-radius:6px;"></div>
<div class="t" style="left:915.5px;width:1000px;text-align:center;top:986.95px;font:bold 17px/17px 'Liberation Sans', sans-serif;color:#fff;transform:scale(0.95,1.0);transform-origin:50% 14.3939px;">CH1</div>
<div style="position:absolute;left:1353px;top:1016.5px;width:125px;height:3.5px;box-sizing:border-box;background:#e6c12e;border-radius:1.5px;"></div>
<div style="position:absolute;left:1489px;top:971px;width:139px;height:53px;box-sizing:border-box;background:linear-gradient(#8fd6e6 0px,#4fb5cf 5px,#36a3bd 40%,#2a8aa3 75%,#1f6e84 95%,#1a5a6a 100%);border-radius:5px;box-shadow:0 1px 1px rgba(0,0,0,.3);"></div>
<div class="t" style="left:1058.5px;width:1000px;text-align:center;top:986.95px;font:bold 17px/17px 'Liberation Sans', sans-serif;color:#fff;transform:scale(0.95,1.0);transform-origin:50% 14.3939px;">CH2</div>
<div style="position:absolute;left:1632px;top:971px;width:140px;height:53px;box-sizing:border-box;background:linear-gradient(#a8a8a8 0px,#dcdcdc 1px,#d0d0d0 5px,#8c8c8c 8.5px,#808080 30%,#6c6c6c 62%,#565656 calc(100% - 6px),#545454 calc(100% - 4px),#858585 calc(100% - 1.5px),#9a9a9a 100%);border-radius:6px;"></div>
<div class="t" style="left:1202.0px;width:1000px;text-align:center;top:986.95px;font:bold 17px/17px 'Liberation Sans', sans-serif;color:#fff;transform:scale(0.95,1.0);transform-origin:50% 14.3939px;">CH3</div>
<div style="position:absolute;left:1776px;top:971px;width:140px;height:53px;box-sizing:border-box;background:linear-gradient(#a8a8a8 0px,#dcdcdc 1px,#d0d0d0 5px,#8c8c8c 8.5px,#808080 30%,#6c6c6c 62%,#565656 calc(100% - 6px),#545454 calc(100% - 4px),#858585 calc(100% - 1.5px),#9a9a9a 100%);border-radius:6px;"></div>
<div class="t" style="left:1346.0px;width:1000px;text-align:center;top:986.95px;font:bold 17px/17px 'Liberation Sans', sans-serif;color:#fff;transform:scale(0.95,1.0);transform-origin:50% 14.3939px;">CH4</div>
<div style="position:absolute;left:0px;top:1030px;width:1920px;height:50px;box-sizing:border-box;background:#000;"></div>
<svg style="position:absolute;left:800px;top:1040px" width="320" height="32" viewBox="800 1040 320 32">
<g fill="none" stroke="#a2a2a2" stroke-width="1.9">
<path d="M811.3 1049.8 L811.3 1062.6 L822.2 1065 L822.2 1047.6 Z"/>
<path d="M825 1052.5 Q828 1056.5 825 1060.5"/>
<path d="M895.5 1047.5 L895.5 1062.5 L883 1055 Z"/>
<circle cx="960" cy="1055" r="7.8"/>
<rect x="1024.8" y="1048.5" width="13.2" height="13.2"/>
<path d="M1095.3 1049.8 L1095.3 1062.6 L1106.2 1065 L1106.2 1047.6 Z"/>
<path d="M1108.5 1051.5 Q1111.5 1056.3 1108.5 1061"/>
<path d="M1111.3 1049.5 Q1115.8 1056.3 1111.3 1063"/>
</g></svg>
</body></html>
